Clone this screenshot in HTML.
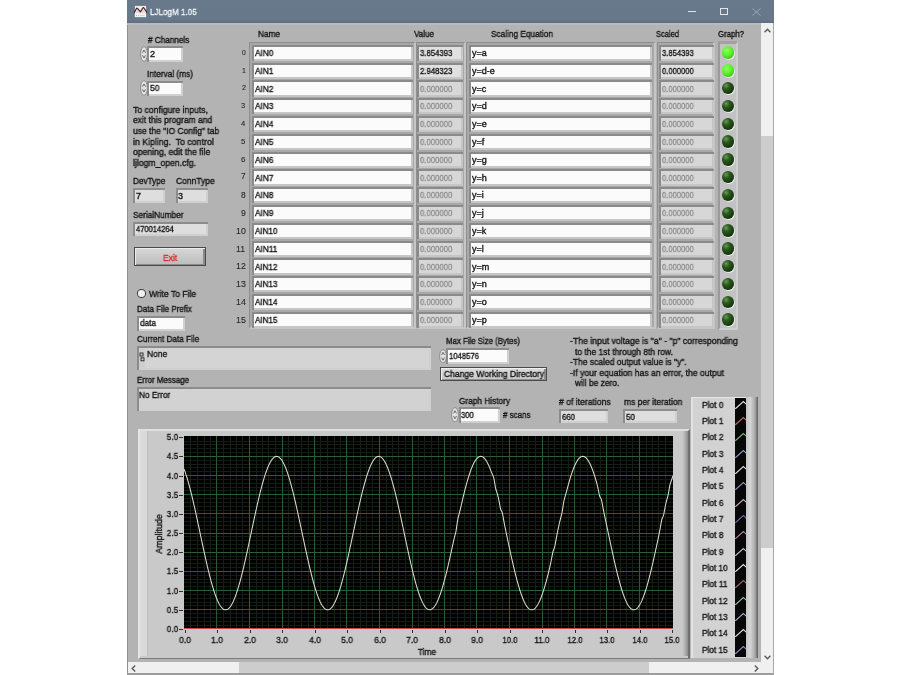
<!DOCTYPE html>
<html><head><meta charset="utf-8"><style>
html,body{margin:0;padding:0;}
body{width:900px;height:675px;background:#fff;position:relative;overflow:hidden;font-family:"Liberation Sans", sans-serif;}
.t,.tt{position:absolute;white-space:nowrap;font-family:"Liberation Sans", sans-serif;will-change:transform;}
.t{-webkit-text-stroke:0.35px currentColor;}
</style></head><body>
<div style="position:absolute;left:127.00px;top:0.00px;width:647.00px;height:675.00px;background:#b3b3b3;"></div>
<div style="position:absolute;left:127.00px;top:0.00px;width:647.00px;height:23.00px;background:linear-gradient(#67798b 0%,#66788a 85%,#626d7e 100%);"></div>
<div style="position:absolute;left:127.00px;top:23.00px;width:647.00px;height:1.50px;background:#b5bbc5;"></div>
<div style="position:absolute;left:127.00px;top:24.50px;width:1.20px;height:650.50px;background:#8e8e8e;"></div>
<div style="position:absolute;left:127.00px;top:673.30px;width:647.00px;height:1.70px;background:#9c9c9c;"></div>
<svg style="position:absolute;left:133px;top:5px" width="15" height="13" viewBox="0 0 15 13"><rect x="1.9" y="0.9" width="11.2" height="11.2" fill="#f6eaea"/><path d="M3 8 L4.2 3.5 L6.8 7.5 Z M8 7.5 L10.3 3.2 L12 8 Z" fill="#ecc8c8" opacity="0.7"/><rect x="1.9" y="9" width="11.2" height="3.1" fill="#f2f5f5"/><path d="M3 10.6 H12" stroke="#8a9a9a" stroke-width="0.7" stroke-dasharray="1 1.2"/><path d="M1.2 7.6 L3.6 3.2 Q3.9 2.7 4.3 3.2 L7.4 6.9 L10 2.7 Q10.3 2.2 10.7 2.7 L14 7.6" stroke="#3e2424" stroke-width="1.15" fill="none" stroke-linejoin="round"/></svg>
<div class="tt" style="left:150.00px;top:5.70px;font-size:9.6px;line-height:12px;color:#f4f6fa;transform:scaleX(0.841);transform-origin:left center;-webkit-text-stroke:0.3px #f4f6fa;">LJLogM 1.05</div>
<div style="position:absolute;left:688.00px;top:11.00px;width:8.00px;height:1.00px;background:#dfe4ea;"></div>
<div style="position:absolute;left:720.00px;top:8.00px;width:8.00px;height:7.00px;border:1px solid #e2e6ec;box-sizing:border-box;"></div>
<svg style="position:absolute;left:752px;top:8px" width="9" height="8" viewBox="0 0 9 8"><path d="M0.5 0.5 L8.5 7.5 M8.5 0.5 L0.5 7.5" stroke="#9aa6b4" stroke-width="1"/></svg>
<div style="position:absolute;left:761.00px;top:23.00px;width:12.60px;height:639.00px;background:#f0f0f0;"></div>
<div style="position:absolute;left:761.00px;top:136.00px;width:12.60px;height:412.00px;background:#cdcdcd;"></div>
<div style="position:absolute;left:773.00px;top:23.00px;width:1.00px;height:652.00px;background:#a3abab;"></div>
<div style="position:absolute;left:128.00px;top:662.00px;width:633.00px;height:11.30px;background:#f0f0f0;"></div>
<div style="position:absolute;left:239.40px;top:662.00px;width:409.50px;height:11.30px;background:#cdcdcd;"></div>
<div style="position:absolute;left:761.00px;top:662.00px;width:12.00px;height:11.30px;background:#f0f0f0;"></div>
<svg style="position:absolute;left:764px;top:27.5px" width="7" height="5"><path d="M0.6 4.2 L3.5 1.2 L6.4 4.2" stroke="#5a5a5a" stroke-width="1.4" fill="none"/></svg>
<svg style="position:absolute;left:764px;top:654.5px" width="7" height="5"><path d="M0.6 0.8 L3.5 3.8 L6.4 0.8" stroke="#5a5a5a" stroke-width="1.4" fill="none"/></svg>
<svg style="position:absolute;left:131px;top:665px" width="5" height="7"><path d="M4.2 0.6 L1.2 3.5 L4.2 6.4" stroke="#5a5a5a" stroke-width="1.4" fill="none"/></svg>
<svg style="position:absolute;left:753.8px;top:665px" width="5" height="7"><path d="M0.8 0.6 L3.8 3.5 L0.8 6.4" stroke="#5a5a5a" stroke-width="1.4" fill="none"/></svg>
<div class="t" style="left:147.70px;top:33.50px;font-size:9px;line-height:12px;color:#141414;transform:scaleX(0.907);transform-origin:left center;"># Channels</div>
<svg style="position:absolute;left:139.5px;top:46px" width="8" height="16" viewBox="0 0 8 16"><ellipse cx="4" cy="8.0" rx="3.4" ry="7.4" fill="#e2e2e2" stroke="#8a8a8a" stroke-width="1"/><path d="M2.5 6.7 L4 4.0 L5.5 6.7 M2.5 9.3 L4 12.0 L5.5 9.3" stroke="#5a5a5a" stroke-width="0.9" fill="none"/></svg>
<div style="position:absolute;left:146.50px;top:46.00px;width:36.50px;height:16.00px;background:#8c8c8c;"></div>
<div style="position:absolute;left:148.50px;top:60.00px;width:34.50px;height:2.00px;background:#d0d0d0;"></div>
<div style="position:absolute;left:181.00px;top:48.00px;width:2.00px;height:14.00px;background:#d0d0d0;"></div>
<div style="position:absolute;left:148.50px;top:48.00px;width:32.50px;height:12.00px;background:#fbfbfb;"></div>
<div class="t" style="left:150.00px;top:48.00px;font-size:9px;line-height:12px;color:#141414;">2</div>
<div class="t" style="left:147.00px;top:67.50px;font-size:9px;line-height:12px;color:#141414;transform:scaleX(0.920);transform-origin:left center;">Interval (ms)</div>
<svg style="position:absolute;left:139.5px;top:80px" width="8" height="16" viewBox="0 0 8 16"><ellipse cx="4" cy="8.0" rx="3.4" ry="7.4" fill="#e2e2e2" stroke="#8a8a8a" stroke-width="1"/><path d="M2.5 6.7 L4 4.0 L5.5 6.7 M2.5 9.3 L4 12.0 L5.5 9.3" stroke="#5a5a5a" stroke-width="0.9" fill="none"/></svg>
<div style="position:absolute;left:146.50px;top:80.50px;width:36.50px;height:15.50px;background:#8c8c8c;"></div>
<div style="position:absolute;left:148.50px;top:94.00px;width:34.50px;height:2.00px;background:#d0d0d0;"></div>
<div style="position:absolute;left:181.00px;top:82.50px;width:2.00px;height:13.50px;background:#d0d0d0;"></div>
<div style="position:absolute;left:148.50px;top:82.50px;width:32.50px;height:11.50px;background:#fbfbfb;"></div>
<div class="t" style="left:149.50px;top:82.20px;font-size:9px;line-height:12px;color:#141414;transform:scaleX(0.949);transform-origin:left center;">50</div>
<div class="t" style="left:133.00px;top:103.80px;font-size:9px;line-height:12px;color:#141414;transform:scaleX(0.961);transform-origin:left center;">To configure inputs,</div>
<div class="t" style="left:133.00px;top:114.40px;font-size:9px;line-height:12px;color:#141414;transform:scaleX(0.942);transform-origin:left center;">exit this program and</div>
<div class="t" style="left:133.00px;top:125.00px;font-size:9px;line-height:12px;color:#141414;transform:scaleX(0.941);transform-origin:left center;">use the &quot;IO Config&quot; tab</div>
<div class="t" style="left:133.00px;top:135.60px;font-size:9px;line-height:12px;color:#141414;transform:scaleX(0.974);transform-origin:left center;">in Kipling.&nbsp; To control</div>
<div class="t" style="left:133.00px;top:146.20px;font-size:9px;line-height:12px;color:#141414;transform:scaleX(0.960);transform-origin:left center;">opening, edit the file</div>
<div class="t" style="left:133.00px;top:156.80px;font-size:9px;line-height:12px;color:#141414;transform:scaleX(0.961);transform-origin:left center;">ljlogm_open.cfg.</div>
<div class="t" style="left:133.00px;top:175.40px;font-size:9px;line-height:12px;color:#141414;transform:scaleX(0.909);transform-origin:left center;">DevType</div>
<div style="position:absolute;left:133.20px;top:188.00px;width:31.80px;height:15.00px;background:#8c8c8c;"></div>
<div style="position:absolute;left:135.20px;top:201.00px;width:29.80px;height:2.00px;background:#d0d0d0;"></div>
<div style="position:absolute;left:163.00px;top:190.00px;width:2.00px;height:13.00px;background:#d0d0d0;"></div>
<div style="position:absolute;left:135.20px;top:190.00px;width:27.80px;height:11.00px;background:#dedede;"></div>
<div class="t" style="left:136.30px;top:190.00px;font-size:9px;line-height:12px;color:#141414;">7</div>
<div class="t" style="left:175.90px;top:175.40px;font-size:9px;line-height:12px;color:#141414;transform:scaleX(0.943);transform-origin:left center;">ConnType</div>
<div style="position:absolute;left:175.70px;top:188.00px;width:32.00px;height:15.00px;background:#8c8c8c;"></div>
<div style="position:absolute;left:177.70px;top:201.00px;width:30.00px;height:2.00px;background:#d0d0d0;"></div>
<div style="position:absolute;left:205.70px;top:190.00px;width:2.00px;height:13.00px;background:#d0d0d0;"></div>
<div style="position:absolute;left:177.70px;top:190.00px;width:28.00px;height:11.00px;background:#dedede;"></div>
<div class="t" style="left:178.30px;top:190.00px;font-size:9px;line-height:12px;color:#141414;">3</div>
<div class="t" style="left:133.00px;top:209.10px;font-size:9px;line-height:12px;color:#141414;transform:scaleX(0.918);transform-origin:left center;">SerialNumber</div>
<div style="position:absolute;left:133.20px;top:221.50px;width:74.60px;height:14.50px;background:#8c8c8c;"></div>
<div style="position:absolute;left:135.20px;top:234.00px;width:72.60px;height:2.00px;background:#d0d0d0;"></div>
<div style="position:absolute;left:205.80px;top:223.50px;width:2.00px;height:12.50px;background:#d0d0d0;"></div>
<div style="position:absolute;left:135.20px;top:223.50px;width:70.60px;height:10.50px;background:#dedede;"></div>
<div class="t" style="left:135.80px;top:223.10px;font-size:9px;line-height:12px;color:#141414;transform:scaleX(0.839);transform-origin:left center;">470014264</div>
<div style="position:absolute;left:133.70px;top:247.00px;width:72.30px;height:19.30px;background:linear-gradient(#d8d8d8,#c8c8c8 55%,#bcbcbc);border:1.3px solid #4a4a4a;box-sizing:border-box;box-shadow:inset 1px 1px 0 #ececec, inset -2px -1px 0 #8a8a8a;"></div>
<div class="t" style="left:-30.40px;width:400px;text-align:center;top:251.50px;font-size:9px;line-height:12px;color:#dc2a30;transform:scaleX(0.933);transform-origin:center center;">Exit</div>
<div style="position:absolute;left:137.2px;top:289.3px;width:8.8px;height:8.4px;border-radius:50%;background:#f2f2f2;border:1px solid #3a3a3a;box-sizing:border-box"></div>
<div class="t" style="left:148.50px;top:288.00px;font-size:9px;line-height:12px;color:#141414;transform:scaleX(0.946);transform-origin:left center;">Write To File</div>
<div class="t" style="left:137.40px;top:303.00px;font-size:9px;line-height:12px;color:#141414;transform:scaleX(0.891);transform-origin:left center;">Data File Prefix</div>
<div style="position:absolute;left:137.00px;top:315.50px;width:48.00px;height:15.00px;background:#8c8c8c;"></div>
<div style="position:absolute;left:139.00px;top:328.50px;width:46.00px;height:2.00px;background:#d0d0d0;"></div>
<div style="position:absolute;left:183.00px;top:317.50px;width:2.00px;height:13.00px;background:#d0d0d0;"></div>
<div style="position:absolute;left:139.00px;top:317.50px;width:44.00px;height:11.00px;background:#fbfbfb;"></div>
<div class="t" style="left:140.00px;top:317.00px;font-size:9px;line-height:12px;color:#141414;transform:scaleX(0.914);transform-origin:left center;">data</div>
<div class="t" style="left:137.40px;top:333.00px;font-size:9px;line-height:12px;color:#141414;transform:scaleX(0.908);transform-origin:left center;">Current Data File</div>
<div style="position:absolute;left:136.50px;top:346.00px;width:294.00px;height:24.00px;background:#8c8c8c;"></div>
<div style="position:absolute;left:138.50px;top:368.00px;width:292.00px;height:2.00px;background:#d0d0d0;"></div>
<div style="position:absolute;left:428.50px;top:348.00px;width:2.00px;height:22.00px;background:#d0d0d0;"></div>
<div style="position:absolute;left:138.50px;top:348.00px;width:290.00px;height:20.00px;background:#d4d4d4;"></div>
<div style="position:absolute;left:138.50px;top:348.00px;width:6.00px;height:20.00px;background:#cecece;"></div>
<svg style="position:absolute;left:139px;top:352px" width="6" height="10"><rect x="1" y="1" width="3" height="3" fill="none" stroke="#222" stroke-width="0.9"/><rect x="2" y="5.8" width="3" height="3" fill="none" stroke="#222" stroke-width="0.9"/></svg>
<div class="t" style="left:146.80px;top:347.50px;font-size:9px;line-height:12px;color:#141414;transform:scaleX(0.939);transform-origin:left center;">None</div>
<div class="t" style="left:136.70px;top:374.00px;font-size:9px;line-height:12px;color:#141414;transform:scaleX(0.881);transform-origin:left center;">Error Message</div>
<div style="position:absolute;left:136.50px;top:387.00px;width:294.00px;height:23.50px;background:#8c8c8c;"></div>
<div style="position:absolute;left:138.50px;top:408.50px;width:292.00px;height:2.00px;background:#d0d0d0;"></div>
<div style="position:absolute;left:428.50px;top:389.00px;width:2.00px;height:21.50px;background:#d0d0d0;"></div>
<div style="position:absolute;left:138.50px;top:389.00px;width:290.00px;height:19.50px;background:#d2d2d2;"></div>
<div class="t" style="left:139.20px;top:389.00px;font-size:9px;line-height:12px;color:#141414;transform:scaleX(0.921);transform-origin:left center;">No Error</div>
<div class="t" style="left:258.30px;top:28.20px;font-size:9px;line-height:12px;color:#141414;transform:scaleX(0.916);transform-origin:left center;">Name</div>
<div class="t" style="left:414.00px;top:28.20px;font-size:9px;line-height:12px;color:#141414;transform:scaleX(0.895);transform-origin:left center;">Value</div>
<div class="t" style="left:491.10px;top:28.20px;font-size:9px;line-height:12px;color:#141414;transform:scaleX(0.918);transform-origin:left center;">Scaling Equation</div>
<div class="t" style="left:656.00px;top:28.20px;font-size:9px;line-height:12px;color:#141414;transform:scaleX(0.836);transform-origin:left center;">Scaled</div>
<div class="t" style="left:718.00px;top:28.20px;font-size:9px;line-height:12px;color:#141414;transform:scaleX(0.866);transform-origin:left center;">Graph?</div>
<div style="position:absolute;left:249.00px;top:41.80px;width:166.50px;height:287.20px;background:#a8a8a8;border-top:1.5px solid #8e8e8e;border-left:1.5px solid #8e8e8e;border-right:2.5px solid #c6c6c6;border-bottom:2px solid #c6c6c6;box-sizing:border-box;"></div>
<div style="position:absolute;left:416.00px;top:41.80px;width:50.40px;height:287.20px;background:#a8a8a8;border-top:1.5px solid #8e8e8e;border-left:1.5px solid #8e8e8e;border-right:2.5px solid #c6c6c6;border-bottom:2px solid #c6c6c6;box-sizing:border-box;"></div>
<div style="position:absolute;left:466.40px;top:41.80px;width:190.10px;height:287.20px;background:#a8a8a8;border-top:1.5px solid #8e8e8e;border-left:1.5px solid #8e8e8e;border-right:2.5px solid #c6c6c6;border-bottom:2px solid #c6c6c6;box-sizing:border-box;"></div>
<div style="position:absolute;left:656.90px;top:41.80px;width:58.60px;height:287.20px;background:#a8a8a8;border-top:1.5px solid #8e8e8e;border-left:1.5px solid #8e8e8e;border-right:2.5px solid #c6c6c6;border-bottom:2px solid #c6c6c6;box-sizing:border-box;"></div>
<div style="position:absolute;left:251.50px;top:44.70px;width:161.60px;height:16.30px;background:#8a8a8a;"></div>
<div style="position:absolute;left:253.50px;top:59.00px;width:159.60px;height:2.00px;background:#c6c6c6;"></div>
<div style="position:absolute;left:411.10px;top:46.70px;width:2.00px;height:14.30px;background:#c6c6c6;"></div>
<div style="position:absolute;left:253.50px;top:46.70px;width:157.60px;height:12.30px;background:#fbfbfb;"></div>
<div style="position:absolute;left:417.10px;top:44.70px;width:45.80px;height:16.30px;background:#8a8a8a;"></div>
<div style="position:absolute;left:419.10px;top:59.00px;width:43.80px;height:2.00px;background:#c6c6c6;"></div>
<div style="position:absolute;left:460.90px;top:46.70px;width:2.00px;height:14.30px;background:#c6c6c6;"></div>
<div style="position:absolute;left:419.10px;top:46.70px;width:41.80px;height:12.30px;background:#e0e0e0;"></div>
<div style="position:absolute;left:468.90px;top:44.70px;width:183.30px;height:16.30px;background:#8a8a8a;"></div>
<div style="position:absolute;left:470.90px;top:59.00px;width:181.30px;height:2.00px;background:#c6c6c6;"></div>
<div style="position:absolute;left:650.20px;top:46.70px;width:2.00px;height:14.30px;background:#c6c6c6;"></div>
<div style="position:absolute;left:470.90px;top:46.70px;width:179.30px;height:12.30px;background:#fbfbfb;"></div>
<div style="position:absolute;left:658.90px;top:44.70px;width:54.70px;height:16.30px;background:#8a8a8a;"></div>
<div style="position:absolute;left:660.90px;top:59.00px;width:52.70px;height:2.00px;background:#c6c6c6;"></div>
<div style="position:absolute;left:711.60px;top:46.70px;width:2.00px;height:14.30px;background:#c6c6c6;"></div>
<div style="position:absolute;left:660.90px;top:46.70px;width:50.70px;height:12.30px;background:#e0e0e0;"></div>
<div class="t" style="right:654.5px;top:46.70px;font-size:6.80px;line-height:12px;color:#262626;-webkit-text-stroke:0.1px #262626">0</div>
<div class="t" style="left:254.60px;top:47.00px;font-size:9px;line-height:12px;color:#141414;transform:scaleX(0.920);transform-origin:left center;">AIN0</div>
<div class="t" style="left:419.80px;top:47.00px;font-size:9px;line-height:12px;color:#141414;transform:scaleX(0.861);transform-origin:left center;">3.854393</div>
<div class="t" style="left:472.00px;top:47.00px;font-size:9px;line-height:12px;color:#141414;">y=a</div>
<div class="t" style="left:661.80px;top:47.00px;font-size:9px;line-height:12px;color:#141414;transform:scaleX(0.847);transform-origin:left center;">3.854393</div>
<div style="position:absolute;left:251.50px;top:62.50px;width:161.60px;height:16.30px;background:#8a8a8a;"></div>
<div style="position:absolute;left:253.50px;top:76.80px;width:159.60px;height:2.00px;background:#c6c6c6;"></div>
<div style="position:absolute;left:411.10px;top:64.50px;width:2.00px;height:14.30px;background:#c6c6c6;"></div>
<div style="position:absolute;left:253.50px;top:64.50px;width:157.60px;height:12.30px;background:#fbfbfb;"></div>
<div style="position:absolute;left:417.10px;top:62.50px;width:45.80px;height:16.30px;background:#8a8a8a;"></div>
<div style="position:absolute;left:419.10px;top:76.80px;width:43.80px;height:2.00px;background:#c6c6c6;"></div>
<div style="position:absolute;left:460.90px;top:64.50px;width:2.00px;height:14.30px;background:#c6c6c6;"></div>
<div style="position:absolute;left:419.10px;top:64.50px;width:41.80px;height:12.30px;background:#e0e0e0;"></div>
<div style="position:absolute;left:468.90px;top:62.50px;width:183.30px;height:16.30px;background:#8a8a8a;"></div>
<div style="position:absolute;left:470.90px;top:76.80px;width:181.30px;height:2.00px;background:#c6c6c6;"></div>
<div style="position:absolute;left:650.20px;top:64.50px;width:2.00px;height:14.30px;background:#c6c6c6;"></div>
<div style="position:absolute;left:470.90px;top:64.50px;width:179.30px;height:12.30px;background:#fbfbfb;"></div>
<div style="position:absolute;left:658.90px;top:62.50px;width:54.70px;height:16.30px;background:#8a8a8a;"></div>
<div style="position:absolute;left:660.90px;top:76.80px;width:52.70px;height:2.00px;background:#c6c6c6;"></div>
<div style="position:absolute;left:711.60px;top:64.50px;width:2.00px;height:14.30px;background:#c6c6c6;"></div>
<div style="position:absolute;left:660.90px;top:64.50px;width:50.70px;height:12.30px;background:#e0e0e0;"></div>
<div class="t" style="right:654.5px;top:64.50px;font-size:7.00px;line-height:12px;color:#262626;-webkit-text-stroke:0.1px #262626">1</div>
<div class="t" style="left:254.60px;top:64.80px;font-size:9px;line-height:12px;color:#141414;transform:scaleX(0.920);transform-origin:left center;">AIN1</div>
<div class="t" style="left:419.80px;top:64.80px;font-size:9px;line-height:12px;color:#141414;transform:scaleX(0.861);transform-origin:left center;">2.948323</div>
<div class="t" style="left:472.00px;top:64.80px;font-size:9px;line-height:12px;color:#141414;">y=d-e</div>
<div class="t" style="left:661.80px;top:64.80px;font-size:9px;line-height:12px;color:#141414;transform:scaleX(0.847);transform-origin:left center;">0.000000</div>
<div style="position:absolute;left:251.50px;top:80.30px;width:161.60px;height:16.30px;background:#8a8a8a;"></div>
<div style="position:absolute;left:253.50px;top:94.60px;width:159.60px;height:2.00px;background:#c6c6c6;"></div>
<div style="position:absolute;left:411.10px;top:82.30px;width:2.00px;height:14.30px;background:#c6c6c6;"></div>
<div style="position:absolute;left:253.50px;top:82.30px;width:157.60px;height:12.30px;background:#fbfbfb;"></div>
<div style="position:absolute;left:417.10px;top:80.30px;width:45.80px;height:16.30px;background:#8a8a8a;"></div>
<div style="position:absolute;left:419.10px;top:94.60px;width:43.80px;height:2.00px;background:#c6c6c6;"></div>
<div style="position:absolute;left:460.90px;top:82.30px;width:2.00px;height:14.30px;background:#c6c6c6;"></div>
<div style="position:absolute;left:419.10px;top:82.30px;width:41.80px;height:12.30px;background:#d7d7d7;"></div>
<div style="position:absolute;left:468.90px;top:80.30px;width:183.30px;height:16.30px;background:#8a8a8a;"></div>
<div style="position:absolute;left:470.90px;top:94.60px;width:181.30px;height:2.00px;background:#c6c6c6;"></div>
<div style="position:absolute;left:650.20px;top:82.30px;width:2.00px;height:14.30px;background:#c6c6c6;"></div>
<div style="position:absolute;left:470.90px;top:82.30px;width:179.30px;height:12.30px;background:#fbfbfb;"></div>
<div style="position:absolute;left:658.90px;top:80.30px;width:54.70px;height:16.30px;background:#8a8a8a;"></div>
<div style="position:absolute;left:660.90px;top:94.60px;width:52.70px;height:2.00px;background:#c6c6c6;"></div>
<div style="position:absolute;left:711.60px;top:82.30px;width:2.00px;height:14.30px;background:#c6c6c6;"></div>
<div style="position:absolute;left:660.90px;top:82.30px;width:50.70px;height:12.30px;background:#d7d7d7;"></div>
<div class="t" style="right:654.5px;top:82.30px;font-size:7.20px;line-height:12px;color:#262626;-webkit-text-stroke:0.1px #262626">2</div>
<div class="t" style="left:254.60px;top:82.60px;font-size:9px;line-height:12px;color:#141414;transform:scaleX(0.920);transform-origin:left center;">AIN2</div>
<div class="t" style="left:419.80px;top:82.60px;font-size:9px;line-height:12px;color:#8e8e8e;transform:scaleX(0.861);transform-origin:left center;">0.000000</div>
<div class="t" style="left:472.00px;top:82.60px;font-size:9px;line-height:12px;color:#141414;">y=c</div>
<div class="t" style="left:661.80px;top:82.60px;font-size:9px;line-height:12px;color:#8e8e8e;transform:scaleX(0.847);transform-origin:left center;">0.000000</div>
<div style="position:absolute;left:251.50px;top:98.10px;width:161.60px;height:16.30px;background:#8a8a8a;"></div>
<div style="position:absolute;left:253.50px;top:112.40px;width:159.60px;height:2.00px;background:#c6c6c6;"></div>
<div style="position:absolute;left:411.10px;top:100.10px;width:2.00px;height:14.30px;background:#c6c6c6;"></div>
<div style="position:absolute;left:253.50px;top:100.10px;width:157.60px;height:12.30px;background:#fbfbfb;"></div>
<div style="position:absolute;left:417.10px;top:98.10px;width:45.80px;height:16.30px;background:#8a8a8a;"></div>
<div style="position:absolute;left:419.10px;top:112.40px;width:43.80px;height:2.00px;background:#c6c6c6;"></div>
<div style="position:absolute;left:460.90px;top:100.10px;width:2.00px;height:14.30px;background:#c6c6c6;"></div>
<div style="position:absolute;left:419.10px;top:100.10px;width:41.80px;height:12.30px;background:#d7d7d7;"></div>
<div style="position:absolute;left:468.90px;top:98.10px;width:183.30px;height:16.30px;background:#8a8a8a;"></div>
<div style="position:absolute;left:470.90px;top:112.40px;width:181.30px;height:2.00px;background:#c6c6c6;"></div>
<div style="position:absolute;left:650.20px;top:100.10px;width:2.00px;height:14.30px;background:#c6c6c6;"></div>
<div style="position:absolute;left:470.90px;top:100.10px;width:179.30px;height:12.30px;background:#fbfbfb;"></div>
<div style="position:absolute;left:658.90px;top:98.10px;width:54.70px;height:16.30px;background:#8a8a8a;"></div>
<div style="position:absolute;left:660.90px;top:112.40px;width:52.70px;height:2.00px;background:#c6c6c6;"></div>
<div style="position:absolute;left:711.60px;top:100.10px;width:2.00px;height:14.30px;background:#c6c6c6;"></div>
<div style="position:absolute;left:660.90px;top:100.10px;width:50.70px;height:12.30px;background:#d7d7d7;"></div>
<div class="t" style="right:654.5px;top:100.10px;font-size:7.40px;line-height:12px;color:#262626;-webkit-text-stroke:0.1px #262626">3</div>
<div class="t" style="left:254.60px;top:100.40px;font-size:9px;line-height:12px;color:#141414;transform:scaleX(0.920);transform-origin:left center;">AIN3</div>
<div class="t" style="left:419.80px;top:100.40px;font-size:9px;line-height:12px;color:#8e8e8e;transform:scaleX(0.861);transform-origin:left center;">0.000000</div>
<div class="t" style="left:472.00px;top:100.40px;font-size:9px;line-height:12px;color:#141414;">y=d</div>
<div class="t" style="left:661.80px;top:100.40px;font-size:9px;line-height:12px;color:#8e8e8e;transform:scaleX(0.847);transform-origin:left center;">0.000000</div>
<div style="position:absolute;left:251.50px;top:115.90px;width:161.60px;height:16.30px;background:#8a8a8a;"></div>
<div style="position:absolute;left:253.50px;top:130.20px;width:159.60px;height:2.00px;background:#c6c6c6;"></div>
<div style="position:absolute;left:411.10px;top:117.90px;width:2.00px;height:14.30px;background:#c6c6c6;"></div>
<div style="position:absolute;left:253.50px;top:117.90px;width:157.60px;height:12.30px;background:#fbfbfb;"></div>
<div style="position:absolute;left:417.10px;top:115.90px;width:45.80px;height:16.30px;background:#8a8a8a;"></div>
<div style="position:absolute;left:419.10px;top:130.20px;width:43.80px;height:2.00px;background:#c6c6c6;"></div>
<div style="position:absolute;left:460.90px;top:117.90px;width:2.00px;height:14.30px;background:#c6c6c6;"></div>
<div style="position:absolute;left:419.10px;top:117.90px;width:41.80px;height:12.30px;background:#d7d7d7;"></div>
<div style="position:absolute;left:468.90px;top:115.90px;width:183.30px;height:16.30px;background:#8a8a8a;"></div>
<div style="position:absolute;left:470.90px;top:130.20px;width:181.30px;height:2.00px;background:#c6c6c6;"></div>
<div style="position:absolute;left:650.20px;top:117.90px;width:2.00px;height:14.30px;background:#c6c6c6;"></div>
<div style="position:absolute;left:470.90px;top:117.90px;width:179.30px;height:12.30px;background:#fbfbfb;"></div>
<div style="position:absolute;left:658.90px;top:115.90px;width:54.70px;height:16.30px;background:#8a8a8a;"></div>
<div style="position:absolute;left:660.90px;top:130.20px;width:52.70px;height:2.00px;background:#c6c6c6;"></div>
<div style="position:absolute;left:711.60px;top:117.90px;width:2.00px;height:14.30px;background:#c6c6c6;"></div>
<div style="position:absolute;left:660.90px;top:117.90px;width:50.70px;height:12.30px;background:#d7d7d7;"></div>
<div class="t" style="right:654.5px;top:117.90px;font-size:7.60px;line-height:12px;color:#262626;-webkit-text-stroke:0.1px #262626">4</div>
<div class="t" style="left:254.60px;top:118.20px;font-size:9px;line-height:12px;color:#141414;transform:scaleX(0.920);transform-origin:left center;">AIN4</div>
<div class="t" style="left:419.80px;top:118.20px;font-size:9px;line-height:12px;color:#8e8e8e;transform:scaleX(0.861);transform-origin:left center;">0.000000</div>
<div class="t" style="left:472.00px;top:118.20px;font-size:9px;line-height:12px;color:#141414;">y=e</div>
<div class="t" style="left:661.80px;top:118.20px;font-size:9px;line-height:12px;color:#8e8e8e;transform:scaleX(0.847);transform-origin:left center;">0.000000</div>
<div style="position:absolute;left:251.50px;top:133.70px;width:161.60px;height:16.30px;background:#8a8a8a;"></div>
<div style="position:absolute;left:253.50px;top:148.00px;width:159.60px;height:2.00px;background:#c6c6c6;"></div>
<div style="position:absolute;left:411.10px;top:135.70px;width:2.00px;height:14.30px;background:#c6c6c6;"></div>
<div style="position:absolute;left:253.50px;top:135.70px;width:157.60px;height:12.30px;background:#fbfbfb;"></div>
<div style="position:absolute;left:417.10px;top:133.70px;width:45.80px;height:16.30px;background:#8a8a8a;"></div>
<div style="position:absolute;left:419.10px;top:148.00px;width:43.80px;height:2.00px;background:#c6c6c6;"></div>
<div style="position:absolute;left:460.90px;top:135.70px;width:2.00px;height:14.30px;background:#c6c6c6;"></div>
<div style="position:absolute;left:419.10px;top:135.70px;width:41.80px;height:12.30px;background:#d7d7d7;"></div>
<div style="position:absolute;left:468.90px;top:133.70px;width:183.30px;height:16.30px;background:#8a8a8a;"></div>
<div style="position:absolute;left:470.90px;top:148.00px;width:181.30px;height:2.00px;background:#c6c6c6;"></div>
<div style="position:absolute;left:650.20px;top:135.70px;width:2.00px;height:14.30px;background:#c6c6c6;"></div>
<div style="position:absolute;left:470.90px;top:135.70px;width:179.30px;height:12.30px;background:#fbfbfb;"></div>
<div style="position:absolute;left:658.90px;top:133.70px;width:54.70px;height:16.30px;background:#8a8a8a;"></div>
<div style="position:absolute;left:660.90px;top:148.00px;width:52.70px;height:2.00px;background:#c6c6c6;"></div>
<div style="position:absolute;left:711.60px;top:135.70px;width:2.00px;height:14.30px;background:#c6c6c6;"></div>
<div style="position:absolute;left:660.90px;top:135.70px;width:50.70px;height:12.30px;background:#d7d7d7;"></div>
<div class="t" style="right:654.5px;top:135.70px;font-size:7.80px;line-height:12px;color:#262626;-webkit-text-stroke:0.1px #262626">5</div>
<div class="t" style="left:254.60px;top:136.00px;font-size:9px;line-height:12px;color:#141414;transform:scaleX(0.920);transform-origin:left center;">AIN5</div>
<div class="t" style="left:419.80px;top:136.00px;font-size:9px;line-height:12px;color:#8e8e8e;transform:scaleX(0.861);transform-origin:left center;">0.000000</div>
<div class="t" style="left:472.00px;top:136.00px;font-size:9px;line-height:12px;color:#141414;">y=f</div>
<div class="t" style="left:661.80px;top:136.00px;font-size:9px;line-height:12px;color:#8e8e8e;transform:scaleX(0.847);transform-origin:left center;">0.000000</div>
<div style="position:absolute;left:251.50px;top:151.50px;width:161.60px;height:16.30px;background:#8a8a8a;"></div>
<div style="position:absolute;left:253.50px;top:165.80px;width:159.60px;height:2.00px;background:#c6c6c6;"></div>
<div style="position:absolute;left:411.10px;top:153.50px;width:2.00px;height:14.30px;background:#c6c6c6;"></div>
<div style="position:absolute;left:253.50px;top:153.50px;width:157.60px;height:12.30px;background:#fbfbfb;"></div>
<div style="position:absolute;left:417.10px;top:151.50px;width:45.80px;height:16.30px;background:#8a8a8a;"></div>
<div style="position:absolute;left:419.10px;top:165.80px;width:43.80px;height:2.00px;background:#c6c6c6;"></div>
<div style="position:absolute;left:460.90px;top:153.50px;width:2.00px;height:14.30px;background:#c6c6c6;"></div>
<div style="position:absolute;left:419.10px;top:153.50px;width:41.80px;height:12.30px;background:#d7d7d7;"></div>
<div style="position:absolute;left:468.90px;top:151.50px;width:183.30px;height:16.30px;background:#8a8a8a;"></div>
<div style="position:absolute;left:470.90px;top:165.80px;width:181.30px;height:2.00px;background:#c6c6c6;"></div>
<div style="position:absolute;left:650.20px;top:153.50px;width:2.00px;height:14.30px;background:#c6c6c6;"></div>
<div style="position:absolute;left:470.90px;top:153.50px;width:179.30px;height:12.30px;background:#fbfbfb;"></div>
<div style="position:absolute;left:658.90px;top:151.50px;width:54.70px;height:16.30px;background:#8a8a8a;"></div>
<div style="position:absolute;left:660.90px;top:165.80px;width:52.70px;height:2.00px;background:#c6c6c6;"></div>
<div style="position:absolute;left:711.60px;top:153.50px;width:2.00px;height:14.30px;background:#c6c6c6;"></div>
<div style="position:absolute;left:660.90px;top:153.50px;width:50.70px;height:12.30px;background:#d7d7d7;"></div>
<div class="t" style="right:654.5px;top:153.50px;font-size:8.00px;line-height:12px;color:#262626;-webkit-text-stroke:0.1px #262626">6</div>
<div class="t" style="left:254.60px;top:153.80px;font-size:9px;line-height:12px;color:#141414;transform:scaleX(0.920);transform-origin:left center;">AIN6</div>
<div class="t" style="left:419.80px;top:153.80px;font-size:9px;line-height:12px;color:#8e8e8e;transform:scaleX(0.861);transform-origin:left center;">0.000000</div>
<div class="t" style="left:472.00px;top:153.80px;font-size:9px;line-height:12px;color:#141414;">y=g</div>
<div class="t" style="left:661.80px;top:153.80px;font-size:9px;line-height:12px;color:#8e8e8e;transform:scaleX(0.847);transform-origin:left center;">0.000000</div>
<div style="position:absolute;left:251.50px;top:169.30px;width:161.60px;height:16.30px;background:#8a8a8a;"></div>
<div style="position:absolute;left:253.50px;top:183.60px;width:159.60px;height:2.00px;background:#c6c6c6;"></div>
<div style="position:absolute;left:411.10px;top:171.30px;width:2.00px;height:14.30px;background:#c6c6c6;"></div>
<div style="position:absolute;left:253.50px;top:171.30px;width:157.60px;height:12.30px;background:#fbfbfb;"></div>
<div style="position:absolute;left:417.10px;top:169.30px;width:45.80px;height:16.30px;background:#8a8a8a;"></div>
<div style="position:absolute;left:419.10px;top:183.60px;width:43.80px;height:2.00px;background:#c6c6c6;"></div>
<div style="position:absolute;left:460.90px;top:171.30px;width:2.00px;height:14.30px;background:#c6c6c6;"></div>
<div style="position:absolute;left:419.10px;top:171.30px;width:41.80px;height:12.30px;background:#d7d7d7;"></div>
<div style="position:absolute;left:468.90px;top:169.30px;width:183.30px;height:16.30px;background:#8a8a8a;"></div>
<div style="position:absolute;left:470.90px;top:183.60px;width:181.30px;height:2.00px;background:#c6c6c6;"></div>
<div style="position:absolute;left:650.20px;top:171.30px;width:2.00px;height:14.30px;background:#c6c6c6;"></div>
<div style="position:absolute;left:470.90px;top:171.30px;width:179.30px;height:12.30px;background:#fbfbfb;"></div>
<div style="position:absolute;left:658.90px;top:169.30px;width:54.70px;height:16.30px;background:#8a8a8a;"></div>
<div style="position:absolute;left:660.90px;top:183.60px;width:52.70px;height:2.00px;background:#c6c6c6;"></div>
<div style="position:absolute;left:711.60px;top:171.30px;width:2.00px;height:14.30px;background:#c6c6c6;"></div>
<div style="position:absolute;left:660.90px;top:171.30px;width:50.70px;height:12.30px;background:#d7d7d7;"></div>
<div class="t" style="right:654.5px;top:171.30px;font-size:8.20px;line-height:12px;color:#262626;-webkit-text-stroke:0.1px #262626">7</div>
<div class="t" style="left:254.60px;top:171.60px;font-size:9px;line-height:12px;color:#141414;transform:scaleX(0.920);transform-origin:left center;">AIN7</div>
<div class="t" style="left:419.80px;top:171.60px;font-size:9px;line-height:12px;color:#8e8e8e;transform:scaleX(0.861);transform-origin:left center;">0.000000</div>
<div class="t" style="left:472.00px;top:171.60px;font-size:9px;line-height:12px;color:#141414;">y=h</div>
<div class="t" style="left:661.80px;top:171.60px;font-size:9px;line-height:12px;color:#8e8e8e;transform:scaleX(0.847);transform-origin:left center;">0.000000</div>
<div style="position:absolute;left:251.50px;top:187.10px;width:161.60px;height:16.30px;background:#8a8a8a;"></div>
<div style="position:absolute;left:253.50px;top:201.40px;width:159.60px;height:2.00px;background:#c6c6c6;"></div>
<div style="position:absolute;left:411.10px;top:189.10px;width:2.00px;height:14.30px;background:#c6c6c6;"></div>
<div style="position:absolute;left:253.50px;top:189.10px;width:157.60px;height:12.30px;background:#fbfbfb;"></div>
<div style="position:absolute;left:417.10px;top:187.10px;width:45.80px;height:16.30px;background:#8a8a8a;"></div>
<div style="position:absolute;left:419.10px;top:201.40px;width:43.80px;height:2.00px;background:#c6c6c6;"></div>
<div style="position:absolute;left:460.90px;top:189.10px;width:2.00px;height:14.30px;background:#c6c6c6;"></div>
<div style="position:absolute;left:419.10px;top:189.10px;width:41.80px;height:12.30px;background:#d7d7d7;"></div>
<div style="position:absolute;left:468.90px;top:187.10px;width:183.30px;height:16.30px;background:#8a8a8a;"></div>
<div style="position:absolute;left:470.90px;top:201.40px;width:181.30px;height:2.00px;background:#c6c6c6;"></div>
<div style="position:absolute;left:650.20px;top:189.10px;width:2.00px;height:14.30px;background:#c6c6c6;"></div>
<div style="position:absolute;left:470.90px;top:189.10px;width:179.30px;height:12.30px;background:#fbfbfb;"></div>
<div style="position:absolute;left:658.90px;top:187.10px;width:54.70px;height:16.30px;background:#8a8a8a;"></div>
<div style="position:absolute;left:660.90px;top:201.40px;width:52.70px;height:2.00px;background:#c6c6c6;"></div>
<div style="position:absolute;left:711.60px;top:189.10px;width:2.00px;height:14.30px;background:#c6c6c6;"></div>
<div style="position:absolute;left:660.90px;top:189.10px;width:50.70px;height:12.30px;background:#d7d7d7;"></div>
<div class="t" style="right:654.5px;top:189.10px;font-size:8.40px;line-height:12px;color:#262626;-webkit-text-stroke:0.1px #262626">8</div>
<div class="t" style="left:254.60px;top:189.40px;font-size:9px;line-height:12px;color:#141414;transform:scaleX(0.920);transform-origin:left center;">AIN8</div>
<div class="t" style="left:419.80px;top:189.40px;font-size:9px;line-height:12px;color:#8e8e8e;transform:scaleX(0.861);transform-origin:left center;">0.000000</div>
<div class="t" style="left:472.00px;top:189.40px;font-size:9px;line-height:12px;color:#141414;">y=i</div>
<div class="t" style="left:661.80px;top:189.40px;font-size:9px;line-height:12px;color:#8e8e8e;transform:scaleX(0.847);transform-origin:left center;">0.000000</div>
<div style="position:absolute;left:251.50px;top:204.90px;width:161.60px;height:16.30px;background:#8a8a8a;"></div>
<div style="position:absolute;left:253.50px;top:219.20px;width:159.60px;height:2.00px;background:#c6c6c6;"></div>
<div style="position:absolute;left:411.10px;top:206.90px;width:2.00px;height:14.30px;background:#c6c6c6;"></div>
<div style="position:absolute;left:253.50px;top:206.90px;width:157.60px;height:12.30px;background:#fbfbfb;"></div>
<div style="position:absolute;left:417.10px;top:204.90px;width:45.80px;height:16.30px;background:#8a8a8a;"></div>
<div style="position:absolute;left:419.10px;top:219.20px;width:43.80px;height:2.00px;background:#c6c6c6;"></div>
<div style="position:absolute;left:460.90px;top:206.90px;width:2.00px;height:14.30px;background:#c6c6c6;"></div>
<div style="position:absolute;left:419.10px;top:206.90px;width:41.80px;height:12.30px;background:#d7d7d7;"></div>
<div style="position:absolute;left:468.90px;top:204.90px;width:183.30px;height:16.30px;background:#8a8a8a;"></div>
<div style="position:absolute;left:470.90px;top:219.20px;width:181.30px;height:2.00px;background:#c6c6c6;"></div>
<div style="position:absolute;left:650.20px;top:206.90px;width:2.00px;height:14.30px;background:#c6c6c6;"></div>
<div style="position:absolute;left:470.90px;top:206.90px;width:179.30px;height:12.30px;background:#fbfbfb;"></div>
<div style="position:absolute;left:658.90px;top:204.90px;width:54.70px;height:16.30px;background:#8a8a8a;"></div>
<div style="position:absolute;left:660.90px;top:219.20px;width:52.70px;height:2.00px;background:#c6c6c6;"></div>
<div style="position:absolute;left:711.60px;top:206.90px;width:2.00px;height:14.30px;background:#c6c6c6;"></div>
<div style="position:absolute;left:660.90px;top:206.90px;width:50.70px;height:12.30px;background:#d7d7d7;"></div>
<div class="t" style="right:654.5px;top:206.90px;font-size:8.60px;line-height:12px;color:#262626;-webkit-text-stroke:0.1px #262626">9</div>
<div class="t" style="left:254.60px;top:207.20px;font-size:9px;line-height:12px;color:#141414;transform:scaleX(0.920);transform-origin:left center;">AIN9</div>
<div class="t" style="left:419.80px;top:207.20px;font-size:9px;line-height:12px;color:#8e8e8e;transform:scaleX(0.861);transform-origin:left center;">0.000000</div>
<div class="t" style="left:472.00px;top:207.20px;font-size:9px;line-height:12px;color:#141414;">y=j</div>
<div class="t" style="left:661.80px;top:207.20px;font-size:9px;line-height:12px;color:#8e8e8e;transform:scaleX(0.847);transform-origin:left center;">0.000000</div>
<div style="position:absolute;left:251.50px;top:222.70px;width:161.60px;height:16.30px;background:#8a8a8a;"></div>
<div style="position:absolute;left:253.50px;top:237.00px;width:159.60px;height:2.00px;background:#c6c6c6;"></div>
<div style="position:absolute;left:411.10px;top:224.70px;width:2.00px;height:14.30px;background:#c6c6c6;"></div>
<div style="position:absolute;left:253.50px;top:224.70px;width:157.60px;height:12.30px;background:#fbfbfb;"></div>
<div style="position:absolute;left:417.10px;top:222.70px;width:45.80px;height:16.30px;background:#8a8a8a;"></div>
<div style="position:absolute;left:419.10px;top:237.00px;width:43.80px;height:2.00px;background:#c6c6c6;"></div>
<div style="position:absolute;left:460.90px;top:224.70px;width:2.00px;height:14.30px;background:#c6c6c6;"></div>
<div style="position:absolute;left:419.10px;top:224.70px;width:41.80px;height:12.30px;background:#d7d7d7;"></div>
<div style="position:absolute;left:468.90px;top:222.70px;width:183.30px;height:16.30px;background:#8a8a8a;"></div>
<div style="position:absolute;left:470.90px;top:237.00px;width:181.30px;height:2.00px;background:#c6c6c6;"></div>
<div style="position:absolute;left:650.20px;top:224.70px;width:2.00px;height:14.30px;background:#c6c6c6;"></div>
<div style="position:absolute;left:470.90px;top:224.70px;width:179.30px;height:12.30px;background:#fbfbfb;"></div>
<div style="position:absolute;left:658.90px;top:222.70px;width:54.70px;height:16.30px;background:#8a8a8a;"></div>
<div style="position:absolute;left:660.90px;top:237.00px;width:52.70px;height:2.00px;background:#c6c6c6;"></div>
<div style="position:absolute;left:711.60px;top:224.70px;width:2.00px;height:14.30px;background:#c6c6c6;"></div>
<div style="position:absolute;left:660.90px;top:224.70px;width:50.70px;height:12.30px;background:#d7d7d7;"></div>
<div class="t" style="right:654.5px;top:224.70px;font-size:8.80px;line-height:12px;color:#262626;-webkit-text-stroke:0.1px #262626">10</div>
<div class="t" style="left:254.60px;top:225.00px;font-size:9px;line-height:12px;color:#141414;transform:scaleX(0.896);transform-origin:left center;">AIN10</div>
<div class="t" style="left:419.80px;top:225.00px;font-size:9px;line-height:12px;color:#8e8e8e;transform:scaleX(0.861);transform-origin:left center;">0.000000</div>
<div class="t" style="left:472.00px;top:225.00px;font-size:9px;line-height:12px;color:#141414;">y=k</div>
<div class="t" style="left:661.80px;top:225.00px;font-size:9px;line-height:12px;color:#8e8e8e;transform:scaleX(0.847);transform-origin:left center;">0.000000</div>
<div style="position:absolute;left:251.50px;top:240.50px;width:161.60px;height:16.30px;background:#8a8a8a;"></div>
<div style="position:absolute;left:253.50px;top:254.80px;width:159.60px;height:2.00px;background:#c6c6c6;"></div>
<div style="position:absolute;left:411.10px;top:242.50px;width:2.00px;height:14.30px;background:#c6c6c6;"></div>
<div style="position:absolute;left:253.50px;top:242.50px;width:157.60px;height:12.30px;background:#fbfbfb;"></div>
<div style="position:absolute;left:417.10px;top:240.50px;width:45.80px;height:16.30px;background:#8a8a8a;"></div>
<div style="position:absolute;left:419.10px;top:254.80px;width:43.80px;height:2.00px;background:#c6c6c6;"></div>
<div style="position:absolute;left:460.90px;top:242.50px;width:2.00px;height:14.30px;background:#c6c6c6;"></div>
<div style="position:absolute;left:419.10px;top:242.50px;width:41.80px;height:12.30px;background:#d7d7d7;"></div>
<div style="position:absolute;left:468.90px;top:240.50px;width:183.30px;height:16.30px;background:#8a8a8a;"></div>
<div style="position:absolute;left:470.90px;top:254.80px;width:181.30px;height:2.00px;background:#c6c6c6;"></div>
<div style="position:absolute;left:650.20px;top:242.50px;width:2.00px;height:14.30px;background:#c6c6c6;"></div>
<div style="position:absolute;left:470.90px;top:242.50px;width:179.30px;height:12.30px;background:#fbfbfb;"></div>
<div style="position:absolute;left:658.90px;top:240.50px;width:54.70px;height:16.30px;background:#8a8a8a;"></div>
<div style="position:absolute;left:660.90px;top:254.80px;width:52.70px;height:2.00px;background:#c6c6c6;"></div>
<div style="position:absolute;left:711.60px;top:242.50px;width:2.00px;height:14.30px;background:#c6c6c6;"></div>
<div style="position:absolute;left:660.90px;top:242.50px;width:50.70px;height:12.30px;background:#d7d7d7;"></div>
<div class="t" style="right:654.5px;top:242.50px;font-size:8.80px;line-height:12px;color:#262626;-webkit-text-stroke:0.1px #262626">11</div>
<div class="t" style="left:254.60px;top:242.80px;font-size:9px;line-height:12px;color:#141414;transform:scaleX(0.920);transform-origin:left center;">AIN11</div>
<div class="t" style="left:419.80px;top:242.80px;font-size:9px;line-height:12px;color:#8e8e8e;transform:scaleX(0.861);transform-origin:left center;">0.000000</div>
<div class="t" style="left:472.00px;top:242.80px;font-size:9px;line-height:12px;color:#141414;">y=l</div>
<div class="t" style="left:661.80px;top:242.80px;font-size:9px;line-height:12px;color:#8e8e8e;transform:scaleX(0.847);transform-origin:left center;">0.000000</div>
<div style="position:absolute;left:251.50px;top:258.30px;width:161.60px;height:16.30px;background:#8a8a8a;"></div>
<div style="position:absolute;left:253.50px;top:272.60px;width:159.60px;height:2.00px;background:#c6c6c6;"></div>
<div style="position:absolute;left:411.10px;top:260.30px;width:2.00px;height:14.30px;background:#c6c6c6;"></div>
<div style="position:absolute;left:253.50px;top:260.30px;width:157.60px;height:12.30px;background:#fbfbfb;"></div>
<div style="position:absolute;left:417.10px;top:258.30px;width:45.80px;height:16.30px;background:#8a8a8a;"></div>
<div style="position:absolute;left:419.10px;top:272.60px;width:43.80px;height:2.00px;background:#c6c6c6;"></div>
<div style="position:absolute;left:460.90px;top:260.30px;width:2.00px;height:14.30px;background:#c6c6c6;"></div>
<div style="position:absolute;left:419.10px;top:260.30px;width:41.80px;height:12.30px;background:#d7d7d7;"></div>
<div style="position:absolute;left:468.90px;top:258.30px;width:183.30px;height:16.30px;background:#8a8a8a;"></div>
<div style="position:absolute;left:470.90px;top:272.60px;width:181.30px;height:2.00px;background:#c6c6c6;"></div>
<div style="position:absolute;left:650.20px;top:260.30px;width:2.00px;height:14.30px;background:#c6c6c6;"></div>
<div style="position:absolute;left:470.90px;top:260.30px;width:179.30px;height:12.30px;background:#fbfbfb;"></div>
<div style="position:absolute;left:658.90px;top:258.30px;width:54.70px;height:16.30px;background:#8a8a8a;"></div>
<div style="position:absolute;left:660.90px;top:272.60px;width:52.70px;height:2.00px;background:#c6c6c6;"></div>
<div style="position:absolute;left:711.60px;top:260.30px;width:2.00px;height:14.30px;background:#c6c6c6;"></div>
<div style="position:absolute;left:660.90px;top:260.30px;width:50.70px;height:12.30px;background:#d7d7d7;"></div>
<div class="t" style="right:654.5px;top:260.30px;font-size:8.80px;line-height:12px;color:#262626;-webkit-text-stroke:0.1px #262626">12</div>
<div class="t" style="left:254.60px;top:260.60px;font-size:9px;line-height:12px;color:#141414;transform:scaleX(0.896);transform-origin:left center;">AIN12</div>
<div class="t" style="left:419.80px;top:260.60px;font-size:9px;line-height:12px;color:#8e8e8e;transform:scaleX(0.861);transform-origin:left center;">0.000000</div>
<div class="t" style="left:472.00px;top:260.60px;font-size:9px;line-height:12px;color:#141414;">y=m</div>
<div class="t" style="left:661.80px;top:260.60px;font-size:9px;line-height:12px;color:#8e8e8e;transform:scaleX(0.847);transform-origin:left center;">0.000000</div>
<div style="position:absolute;left:251.50px;top:276.10px;width:161.60px;height:16.30px;background:#8a8a8a;"></div>
<div style="position:absolute;left:253.50px;top:290.40px;width:159.60px;height:2.00px;background:#c6c6c6;"></div>
<div style="position:absolute;left:411.10px;top:278.10px;width:2.00px;height:14.30px;background:#c6c6c6;"></div>
<div style="position:absolute;left:253.50px;top:278.10px;width:157.60px;height:12.30px;background:#fbfbfb;"></div>
<div style="position:absolute;left:417.10px;top:276.10px;width:45.80px;height:16.30px;background:#8a8a8a;"></div>
<div style="position:absolute;left:419.10px;top:290.40px;width:43.80px;height:2.00px;background:#c6c6c6;"></div>
<div style="position:absolute;left:460.90px;top:278.10px;width:2.00px;height:14.30px;background:#c6c6c6;"></div>
<div style="position:absolute;left:419.10px;top:278.10px;width:41.80px;height:12.30px;background:#d7d7d7;"></div>
<div style="position:absolute;left:468.90px;top:276.10px;width:183.30px;height:16.30px;background:#8a8a8a;"></div>
<div style="position:absolute;left:470.90px;top:290.40px;width:181.30px;height:2.00px;background:#c6c6c6;"></div>
<div style="position:absolute;left:650.20px;top:278.10px;width:2.00px;height:14.30px;background:#c6c6c6;"></div>
<div style="position:absolute;left:470.90px;top:278.10px;width:179.30px;height:12.30px;background:#fbfbfb;"></div>
<div style="position:absolute;left:658.90px;top:276.10px;width:54.70px;height:16.30px;background:#8a8a8a;"></div>
<div style="position:absolute;left:660.90px;top:290.40px;width:52.70px;height:2.00px;background:#c6c6c6;"></div>
<div style="position:absolute;left:711.60px;top:278.10px;width:2.00px;height:14.30px;background:#c6c6c6;"></div>
<div style="position:absolute;left:660.90px;top:278.10px;width:50.70px;height:12.30px;background:#d7d7d7;"></div>
<div class="t" style="right:654.5px;top:278.10px;font-size:8.80px;line-height:12px;color:#262626;-webkit-text-stroke:0.1px #262626">13</div>
<div class="t" style="left:254.60px;top:278.40px;font-size:9px;line-height:12px;color:#141414;transform:scaleX(0.896);transform-origin:left center;">AIN13</div>
<div class="t" style="left:419.80px;top:278.40px;font-size:9px;line-height:12px;color:#8e8e8e;transform:scaleX(0.861);transform-origin:left center;">0.000000</div>
<div class="t" style="left:472.00px;top:278.40px;font-size:9px;line-height:12px;color:#141414;">y=n</div>
<div class="t" style="left:661.80px;top:278.40px;font-size:9px;line-height:12px;color:#8e8e8e;transform:scaleX(0.847);transform-origin:left center;">0.000000</div>
<div style="position:absolute;left:251.50px;top:293.90px;width:161.60px;height:16.30px;background:#8a8a8a;"></div>
<div style="position:absolute;left:253.50px;top:308.20px;width:159.60px;height:2.00px;background:#c6c6c6;"></div>
<div style="position:absolute;left:411.10px;top:295.90px;width:2.00px;height:14.30px;background:#c6c6c6;"></div>
<div style="position:absolute;left:253.50px;top:295.90px;width:157.60px;height:12.30px;background:#fbfbfb;"></div>
<div style="position:absolute;left:417.10px;top:293.90px;width:45.80px;height:16.30px;background:#8a8a8a;"></div>
<div style="position:absolute;left:419.10px;top:308.20px;width:43.80px;height:2.00px;background:#c6c6c6;"></div>
<div style="position:absolute;left:460.90px;top:295.90px;width:2.00px;height:14.30px;background:#c6c6c6;"></div>
<div style="position:absolute;left:419.10px;top:295.90px;width:41.80px;height:12.30px;background:#d7d7d7;"></div>
<div style="position:absolute;left:468.90px;top:293.90px;width:183.30px;height:16.30px;background:#8a8a8a;"></div>
<div style="position:absolute;left:470.90px;top:308.20px;width:181.30px;height:2.00px;background:#c6c6c6;"></div>
<div style="position:absolute;left:650.20px;top:295.90px;width:2.00px;height:14.30px;background:#c6c6c6;"></div>
<div style="position:absolute;left:470.90px;top:295.90px;width:179.30px;height:12.30px;background:#fbfbfb;"></div>
<div style="position:absolute;left:658.90px;top:293.90px;width:54.70px;height:16.30px;background:#8a8a8a;"></div>
<div style="position:absolute;left:660.90px;top:308.20px;width:52.70px;height:2.00px;background:#c6c6c6;"></div>
<div style="position:absolute;left:711.60px;top:295.90px;width:2.00px;height:14.30px;background:#c6c6c6;"></div>
<div style="position:absolute;left:660.90px;top:295.90px;width:50.70px;height:12.30px;background:#d7d7d7;"></div>
<div class="t" style="right:654.5px;top:295.90px;font-size:8.80px;line-height:12px;color:#262626;-webkit-text-stroke:0.1px #262626">14</div>
<div class="t" style="left:254.60px;top:296.20px;font-size:9px;line-height:12px;color:#141414;transform:scaleX(0.896);transform-origin:left center;">AIN14</div>
<div class="t" style="left:419.80px;top:296.20px;font-size:9px;line-height:12px;color:#8e8e8e;transform:scaleX(0.861);transform-origin:left center;">0.000000</div>
<div class="t" style="left:472.00px;top:296.20px;font-size:9px;line-height:12px;color:#141414;">y=o</div>
<div class="t" style="left:661.80px;top:296.20px;font-size:9px;line-height:12px;color:#8e8e8e;transform:scaleX(0.847);transform-origin:left center;">0.000000</div>
<div style="position:absolute;left:251.50px;top:311.70px;width:161.60px;height:16.30px;background:#8a8a8a;"></div>
<div style="position:absolute;left:253.50px;top:326.00px;width:159.60px;height:2.00px;background:#c6c6c6;"></div>
<div style="position:absolute;left:411.10px;top:313.70px;width:2.00px;height:14.30px;background:#c6c6c6;"></div>
<div style="position:absolute;left:253.50px;top:313.70px;width:157.60px;height:12.30px;background:#fbfbfb;"></div>
<div style="position:absolute;left:417.10px;top:311.70px;width:45.80px;height:16.30px;background:#8a8a8a;"></div>
<div style="position:absolute;left:419.10px;top:326.00px;width:43.80px;height:2.00px;background:#c6c6c6;"></div>
<div style="position:absolute;left:460.90px;top:313.70px;width:2.00px;height:14.30px;background:#c6c6c6;"></div>
<div style="position:absolute;left:419.10px;top:313.70px;width:41.80px;height:12.30px;background:#d7d7d7;"></div>
<div style="position:absolute;left:468.90px;top:311.70px;width:183.30px;height:16.30px;background:#8a8a8a;"></div>
<div style="position:absolute;left:470.90px;top:326.00px;width:181.30px;height:2.00px;background:#c6c6c6;"></div>
<div style="position:absolute;left:650.20px;top:313.70px;width:2.00px;height:14.30px;background:#c6c6c6;"></div>
<div style="position:absolute;left:470.90px;top:313.70px;width:179.30px;height:12.30px;background:#fbfbfb;"></div>
<div style="position:absolute;left:658.90px;top:311.70px;width:54.70px;height:16.30px;background:#8a8a8a;"></div>
<div style="position:absolute;left:660.90px;top:326.00px;width:52.70px;height:2.00px;background:#c6c6c6;"></div>
<div style="position:absolute;left:711.60px;top:313.70px;width:2.00px;height:14.30px;background:#c6c6c6;"></div>
<div style="position:absolute;left:660.90px;top:313.70px;width:50.70px;height:12.30px;background:#d7d7d7;"></div>
<div class="t" style="right:654.5px;top:313.70px;font-size:8.80px;line-height:12px;color:#262626;-webkit-text-stroke:0.1px #262626">15</div>
<div class="t" style="left:254.60px;top:314.00px;font-size:9px;line-height:12px;color:#141414;transform:scaleX(0.896);transform-origin:left center;">AIN15</div>
<div class="t" style="left:419.80px;top:314.00px;font-size:9px;line-height:12px;color:#8e8e8e;transform:scaleX(0.861);transform-origin:left center;">0.000000</div>
<div class="t" style="left:472.00px;top:314.00px;font-size:9px;line-height:12px;color:#141414;">y=p</div>
<div class="t" style="left:661.80px;top:314.00px;font-size:9px;line-height:12px;color:#8e8e8e;transform:scaleX(0.847);transform-origin:left center;">0.000000</div>
<div style="position:absolute;left:717.60px;top:41.00px;width:20.00px;height:289.00px;background:#c2c2c5;border-top:3px solid #a2a2a2;border-left:2.5px solid #9a9a9a;border-right:2px solid #cdcdcd;border-bottom:2px solid #cdcdcd;box-sizing:border-box;"></div>
<div style="position:absolute;left:722.10px;top:46.40px;width:12.4px;height:12.4px;border-radius:50%;background:radial-gradient(circle at 38% 34%, #8cff60 0%, #5cf02a 45%, #3cb018 92%, #2a8010 100%);box-shadow:0.9px 0.9px 0.3px #ececec"></div>
<div style="position:absolute;left:722.10px;top:64.20px;width:12.4px;height:12.4px;border-radius:50%;background:radial-gradient(circle at 38% 34%, #8cff60 0%, #5cf02a 45%, #3cb018 92%, #2a8010 100%);box-shadow:0.9px 0.9px 0.3px #ececec"></div>
<div style="position:absolute;left:722.10px;top:82.00px;width:12.4px;height:12.4px;border-radius:50%;background:radial-gradient(circle at 34% 30%, #6a9a5a 0%, #2c5a1e 30%, #1a4010 60%, #0a2206 100%);box-shadow:0.9px 0.9px 0.3px #ececec"></div>
<div style="position:absolute;left:722.10px;top:99.80px;width:12.4px;height:12.4px;border-radius:50%;background:radial-gradient(circle at 34% 30%, #6a9a5a 0%, #2c5a1e 30%, #1a4010 60%, #0a2206 100%);box-shadow:0.9px 0.9px 0.3px #ececec"></div>
<div style="position:absolute;left:722.10px;top:117.60px;width:12.4px;height:12.4px;border-radius:50%;background:radial-gradient(circle at 34% 30%, #6a9a5a 0%, #2c5a1e 30%, #1a4010 60%, #0a2206 100%);box-shadow:0.9px 0.9px 0.3px #ececec"></div>
<div style="position:absolute;left:722.10px;top:135.40px;width:12.4px;height:12.4px;border-radius:50%;background:radial-gradient(circle at 34% 30%, #6a9a5a 0%, #2c5a1e 30%, #1a4010 60%, #0a2206 100%);box-shadow:0.9px 0.9px 0.3px #ececec"></div>
<div style="position:absolute;left:722.10px;top:153.20px;width:12.4px;height:12.4px;border-radius:50%;background:radial-gradient(circle at 34% 30%, #6a9a5a 0%, #2c5a1e 30%, #1a4010 60%, #0a2206 100%);box-shadow:0.9px 0.9px 0.3px #ececec"></div>
<div style="position:absolute;left:722.10px;top:171.00px;width:12.4px;height:12.4px;border-radius:50%;background:radial-gradient(circle at 34% 30%, #6a9a5a 0%, #2c5a1e 30%, #1a4010 60%, #0a2206 100%);box-shadow:0.9px 0.9px 0.3px #ececec"></div>
<div style="position:absolute;left:722.10px;top:188.80px;width:12.4px;height:12.4px;border-radius:50%;background:radial-gradient(circle at 34% 30%, #6a9a5a 0%, #2c5a1e 30%, #1a4010 60%, #0a2206 100%);box-shadow:0.9px 0.9px 0.3px #ececec"></div>
<div style="position:absolute;left:722.10px;top:206.60px;width:12.4px;height:12.4px;border-radius:50%;background:radial-gradient(circle at 34% 30%, #6a9a5a 0%, #2c5a1e 30%, #1a4010 60%, #0a2206 100%);box-shadow:0.9px 0.9px 0.3px #ececec"></div>
<div style="position:absolute;left:722.10px;top:224.40px;width:12.4px;height:12.4px;border-radius:50%;background:radial-gradient(circle at 34% 30%, #6a9a5a 0%, #2c5a1e 30%, #1a4010 60%, #0a2206 100%);box-shadow:0.9px 0.9px 0.3px #ececec"></div>
<div style="position:absolute;left:722.10px;top:242.20px;width:12.4px;height:12.4px;border-radius:50%;background:radial-gradient(circle at 34% 30%, #6a9a5a 0%, #2c5a1e 30%, #1a4010 60%, #0a2206 100%);box-shadow:0.9px 0.9px 0.3px #ececec"></div>
<div style="position:absolute;left:722.10px;top:260.00px;width:12.4px;height:12.4px;border-radius:50%;background:radial-gradient(circle at 34% 30%, #6a9a5a 0%, #2c5a1e 30%, #1a4010 60%, #0a2206 100%);box-shadow:0.9px 0.9px 0.3px #ececec"></div>
<div style="position:absolute;left:722.10px;top:277.80px;width:12.4px;height:12.4px;border-radius:50%;background:radial-gradient(circle at 34% 30%, #6a9a5a 0%, #2c5a1e 30%, #1a4010 60%, #0a2206 100%);box-shadow:0.9px 0.9px 0.3px #ececec"></div>
<div style="position:absolute;left:722.10px;top:295.60px;width:12.4px;height:12.4px;border-radius:50%;background:radial-gradient(circle at 34% 30%, #6a9a5a 0%, #2c5a1e 30%, #1a4010 60%, #0a2206 100%);box-shadow:0.9px 0.9px 0.3px #ececec"></div>
<div style="position:absolute;left:722.10px;top:313.40px;width:12.4px;height:12.4px;border-radius:50%;background:radial-gradient(circle at 34% 30%, #6a9a5a 0%, #2c5a1e 30%, #1a4010 60%, #0a2206 100%);box-shadow:0.9px 0.9px 0.3px #ececec"></div>
<div class="t" style="left:446.30px;top:334.50px;font-size:9px;line-height:12px;color:#141414;transform:scaleX(0.870);transform-origin:left center;">Max File Size (Bytes)</div>
<svg style="position:absolute;left:439px;top:348.5px" width="8" height="14.5" viewBox="0 0 8 14.5"><ellipse cx="4" cy="7.25" rx="3.4" ry="6.65" fill="#e2e2e2" stroke="#8a8a8a" stroke-width="1"/><path d="M2.5 5.95 L4 3.25 L5.5 5.95 M2.5 8.55 L4 11.25 L5.5 8.55" stroke="#5a5a5a" stroke-width="0.9" fill="none"/></svg>
<div style="position:absolute;left:446.00px;top:347.50px;width:63.00px;height:16.50px;background:#8c8c8c;"></div>
<div style="position:absolute;left:448.00px;top:362.00px;width:61.00px;height:2.00px;background:#d0d0d0;"></div>
<div style="position:absolute;left:507.00px;top:349.50px;width:2.00px;height:14.50px;background:#d0d0d0;"></div>
<div style="position:absolute;left:448.00px;top:349.50px;width:59.00px;height:12.50px;background:#fbfbfb;"></div>
<div class="t" style="left:449.00px;top:349.70px;font-size:9px;line-height:12px;color:#141414;transform:scaleX(0.856);transform-origin:left center;">1048576</div>
<div style="position:absolute;left:440.40px;top:366.50px;width:106.60px;height:14.00px;background:linear-gradient(#dcdcdc,#c8c8c8);border:1.2px solid #4a4a4a;box-sizing:border-box;box-shadow:inset 1px 1px 0 #eeeeee, inset -2px -1px 0 #8e8e8e;"></div>
<div class="t" style="left:293.50px;width:400px;text-align:center;top:367.60px;font-size:9px;line-height:12px;color:#141414;transform:scaleX(0.949);transform-origin:center center;">Change Working Directory</div>
<div class="t" style="left:569.80px;top:335.30px;font-size:9px;line-height:12px;color:#141414;transform:scaleX(0.966);transform-origin:left center;">-The input voltage is &quot;a&quot; - &quot;p&quot; corresponding</div>
<div class="t" style="left:574.50px;top:345.80px;font-size:9px;line-height:12px;color:#141414;transform:scaleX(0.942);transform-origin:left center;">to the 1st through 8th row.</div>
<div class="t" style="left:569.80px;top:356.30px;font-size:9px;line-height:12px;color:#141414;transform:scaleX(0.945);transform-origin:left center;">-The scaled output value is &quot;y&quot;.</div>
<div class="t" style="left:569.80px;top:366.80px;font-size:9px;line-height:12px;color:#141414;transform:scaleX(0.959);transform-origin:left center;">-If your equation has an error, the output</div>
<div class="t" style="left:574.50px;top:377.30px;font-size:9px;line-height:12px;color:#141414;transform:scaleX(0.932);transform-origin:left center;">will be zero.</div>
<div class="t" style="left:458.90px;top:394.50px;font-size:9px;line-height:12px;color:#141414;transform:scaleX(0.919);transform-origin:left center;">Graph History</div>
<svg style="position:absolute;left:451px;top:406.5px" width="8" height="15.5" viewBox="0 0 8 15.5"><ellipse cx="4" cy="7.75" rx="3.4" ry="7.15" fill="#e2e2e2" stroke="#8a8a8a" stroke-width="1"/><path d="M2.5 6.45 L4 3.75 L5.5 6.45 M2.5 9.05 L4 11.75 L5.5 9.05" stroke="#5a5a5a" stroke-width="0.9" fill="none"/></svg>
<div style="position:absolute;left:458.70px;top:407.00px;width:41.60px;height:16.00px;background:#8c8c8c;"></div>
<div style="position:absolute;left:460.70px;top:421.00px;width:39.60px;height:2.00px;background:#d0d0d0;"></div>
<div style="position:absolute;left:498.30px;top:409.00px;width:2.00px;height:14.00px;background:#d0d0d0;"></div>
<div style="position:absolute;left:460.70px;top:409.00px;width:37.60px;height:12.00px;background:#fbfbfb;"></div>
<div class="t" style="left:461.30px;top:409.30px;font-size:9px;line-height:12px;color:#141414;transform:scaleX(0.846);transform-origin:left center;">300</div>
<div class="t" style="left:502.50px;top:408.60px;font-size:9px;line-height:12px;color:#141414;transform:scaleX(0.887);transform-origin:left center;"># scans</div>
<div class="t" style="left:559.30px;top:396.00px;font-size:9px;line-height:12px;color:#141414;transform:scaleX(0.957);transform-origin:left center;"># of iterations</div>
<div style="position:absolute;left:559.00px;top:409.30px;width:48.50px;height:14.00px;background:#8c8c8c;"></div>
<div style="position:absolute;left:561.00px;top:421.30px;width:46.50px;height:2.00px;background:#d0d0d0;"></div>
<div style="position:absolute;left:605.50px;top:411.30px;width:2.00px;height:12.00px;background:#d0d0d0;"></div>
<div style="position:absolute;left:561.00px;top:411.30px;width:44.50px;height:10.00px;background:#dedede;"></div>
<div class="t" style="left:562.10px;top:410.50px;font-size:9px;line-height:12px;color:#141414;transform:scaleX(0.866);transform-origin:left center;">660</div>
<div class="t" style="left:623.50px;top:396.00px;font-size:9px;line-height:12px;color:#141414;transform:scaleX(0.940);transform-origin:left center;">ms per iteration</div>
<div style="position:absolute;left:623.00px;top:409.30px;width:53.50px;height:14.00px;background:#8c8c8c;"></div>
<div style="position:absolute;left:625.00px;top:421.30px;width:51.50px;height:2.00px;background:#d0d0d0;"></div>
<div style="position:absolute;left:674.50px;top:411.30px;width:2.00px;height:12.00px;background:#d0d0d0;"></div>
<div style="position:absolute;left:625.00px;top:411.30px;width:49.50px;height:10.00px;background:#dedede;"></div>
<div class="t" style="left:625.80px;top:410.50px;font-size:9px;line-height:12px;color:#141414;transform:scaleX(0.899);transform-origin:left center;">50</div>
<div style="position:absolute;left:138.00px;top:429.00px;width:552.00px;height:230.00px;background:#c9c9c9;border-top:2px solid #e0e0e0;border-left:2px solid #e6e6e6;border-right:2px solid #707070;border-bottom:1.5px solid #7c7c7c;box-sizing:border-box;"></div>
<div style="position:absolute;left:140.00px;top:431.00px;width:7.00px;height:225.00px;background:#dadada;"></div>
<div style="position:absolute;left:681.00px;top:431.00px;width:7.00px;height:225.00px;background:linear-gradient(90deg,#cfcfcf,#b8b8b8 50%,#8a8a8a);"></div>
<div style="position:absolute;left:147.00px;top:431.00px;width:1.00px;height:225.00px;background:#bdbdbd;"></div>
<svg style="position:absolute;left:184px;top:436px" width="489" height="193" viewBox="0 0 489 193"><rect width="489" height="193" fill="#000"/><line x1="6.5" y1="0" x2="6.5" y2="193" stroke="#142216" stroke-width="1"/><line x1="13.5" y1="0" x2="13.5" y2="193" stroke="#142216" stroke-width="1"/><line x1="20.5" y1="0" x2="20.5" y2="193" stroke="#142216" stroke-width="1"/><line x1="26.5" y1="0" x2="26.5" y2="193" stroke="#142216" stroke-width="1"/><line x1="39.5" y1="0" x2="39.5" y2="193" stroke="#142216" stroke-width="1"/><line x1="46.5" y1="0" x2="46.5" y2="193" stroke="#142216" stroke-width="1"/><line x1="52.5" y1="0" x2="52.5" y2="193" stroke="#142216" stroke-width="1"/><line x1="58.5" y1="0" x2="58.5" y2="193" stroke="#142216" stroke-width="1"/><line x1="72.5" y1="0" x2="72.5" y2="193" stroke="#142216" stroke-width="1"/><line x1="78.5" y1="0" x2="78.5" y2="193" stroke="#142216" stroke-width="1"/><line x1="84.5" y1="0" x2="84.5" y2="193" stroke="#142216" stroke-width="1"/><line x1="91.5" y1="0" x2="91.5" y2="193" stroke="#142216" stroke-width="1"/><line x1="104.5" y1="0" x2="104.5" y2="193" stroke="#142216" stroke-width="1"/><line x1="110.5" y1="0" x2="110.5" y2="193" stroke="#142216" stroke-width="1"/><line x1="117.5" y1="0" x2="117.5" y2="193" stroke="#142216" stroke-width="1"/><line x1="124.5" y1="0" x2="124.5" y2="193" stroke="#142216" stroke-width="1"/><line x1="136.5" y1="0" x2="136.5" y2="193" stroke="#142216" stroke-width="1"/><line x1="143.5" y1="0" x2="143.5" y2="193" stroke="#142216" stroke-width="1"/><line x1="150.5" y1="0" x2="150.5" y2="193" stroke="#142216" stroke-width="1"/><line x1="156.5" y1="0" x2="156.5" y2="193" stroke="#142216" stroke-width="1"/><line x1="169.5" y1="0" x2="169.5" y2="193" stroke="#142216" stroke-width="1"/><line x1="176.5" y1="0" x2="176.5" y2="193" stroke="#142216" stroke-width="1"/><line x1="182.5" y1="0" x2="182.5" y2="193" stroke="#142216" stroke-width="1"/><line x1="188.5" y1="0" x2="188.5" y2="193" stroke="#142216" stroke-width="1"/><line x1="202.5" y1="0" x2="202.5" y2="193" stroke="#142216" stroke-width="1"/><line x1="208.5" y1="0" x2="208.5" y2="193" stroke="#142216" stroke-width="1"/><line x1="214.5" y1="0" x2="214.5" y2="193" stroke="#142216" stroke-width="1"/><line x1="221.5" y1="0" x2="221.5" y2="193" stroke="#142216" stroke-width="1"/><line x1="234.5" y1="0" x2="234.5" y2="193" stroke="#142216" stroke-width="1"/><line x1="240.5" y1="0" x2="240.5" y2="193" stroke="#142216" stroke-width="1"/><line x1="247.5" y1="0" x2="247.5" y2="193" stroke="#142216" stroke-width="1"/><line x1="254.5" y1="0" x2="254.5" y2="193" stroke="#142216" stroke-width="1"/><line x1="266.5" y1="0" x2="266.5" y2="193" stroke="#142216" stroke-width="1"/><line x1="273.5" y1="0" x2="273.5" y2="193" stroke="#142216" stroke-width="1"/><line x1="280.5" y1="0" x2="280.5" y2="193" stroke="#142216" stroke-width="1"/><line x1="286.5" y1="0" x2="286.5" y2="193" stroke="#142216" stroke-width="1"/><line x1="299.5" y1="0" x2="299.5" y2="193" stroke="#142216" stroke-width="1"/><line x1="306.5" y1="0" x2="306.5" y2="193" stroke="#142216" stroke-width="1"/><line x1="312.5" y1="0" x2="312.5" y2="193" stroke="#142216" stroke-width="1"/><line x1="318.5" y1="0" x2="318.5" y2="193" stroke="#142216" stroke-width="1"/><line x1="332.5" y1="0" x2="332.5" y2="193" stroke="#142216" stroke-width="1"/><line x1="338.5" y1="0" x2="338.5" y2="193" stroke="#142216" stroke-width="1"/><line x1="344.5" y1="0" x2="344.5" y2="193" stroke="#142216" stroke-width="1"/><line x1="351.5" y1="0" x2="351.5" y2="193" stroke="#142216" stroke-width="1"/><line x1="364.5" y1="0" x2="364.5" y2="193" stroke="#142216" stroke-width="1"/><line x1="370.5" y1="0" x2="370.5" y2="193" stroke="#142216" stroke-width="1"/><line x1="377.5" y1="0" x2="377.5" y2="193" stroke="#142216" stroke-width="1"/><line x1="384.5" y1="0" x2="384.5" y2="193" stroke="#142216" stroke-width="1"/><line x1="396.5" y1="0" x2="396.5" y2="193" stroke="#142216" stroke-width="1"/><line x1="403.5" y1="0" x2="403.5" y2="193" stroke="#142216" stroke-width="1"/><line x1="410.5" y1="0" x2="410.5" y2="193" stroke="#142216" stroke-width="1"/><line x1="416.5" y1="0" x2="416.5" y2="193" stroke="#142216" stroke-width="1"/><line x1="429.5" y1="0" x2="429.5" y2="193" stroke="#142216" stroke-width="1"/><line x1="436.5" y1="0" x2="436.5" y2="193" stroke="#142216" stroke-width="1"/><line x1="442.5" y1="0" x2="442.5" y2="193" stroke="#142216" stroke-width="1"/><line x1="448.5" y1="0" x2="448.5" y2="193" stroke="#142216" stroke-width="1"/><line x1="462.5" y1="0" x2="462.5" y2="193" stroke="#142216" stroke-width="1"/><line x1="468.5" y1="0" x2="468.5" y2="193" stroke="#142216" stroke-width="1"/><line x1="474.5" y1="0" x2="474.5" y2="193" stroke="#142216" stroke-width="1"/><line x1="481.5" y1="0" x2="481.5" y2="193" stroke="#142216" stroke-width="1"/><line x1="0" y1="189.5" x2="489" y2="189.5" stroke="#121d14" stroke-width="1"/><line x1="0" y1="185.5" x2="489" y2="185.5" stroke="#121d14" stroke-width="1"/><line x1="0" y1="181.5" x2="489" y2="181.5" stroke="#121d14" stroke-width="1"/><line x1="0" y1="177.5" x2="489" y2="177.5" stroke="#121d14" stroke-width="1"/><line x1="0" y1="169.5" x2="489" y2="169.5" stroke="#121d14" stroke-width="1"/><line x1="0" y1="166.5" x2="489" y2="166.5" stroke="#121d14" stroke-width="1"/><line x1="0" y1="162.5" x2="489" y2="162.5" stroke="#121d14" stroke-width="1"/><line x1="0" y1="158.5" x2="489" y2="158.5" stroke="#121d14" stroke-width="1"/><line x1="0" y1="150.5" x2="489" y2="150.5" stroke="#121d14" stroke-width="1"/><line x1="0" y1="146.5" x2="489" y2="146.5" stroke="#121d14" stroke-width="1"/><line x1="0" y1="143.5" x2="489" y2="143.5" stroke="#121d14" stroke-width="1"/><line x1="0" y1="139.5" x2="489" y2="139.5" stroke="#121d14" stroke-width="1"/><line x1="0" y1="131.5" x2="489" y2="131.5" stroke="#121d14" stroke-width="1"/><line x1="0" y1="127.5" x2="489" y2="127.5" stroke="#121d14" stroke-width="1"/><line x1="0" y1="123.5" x2="489" y2="123.5" stroke="#121d14" stroke-width="1"/><line x1="0" y1="120.5" x2="489" y2="120.5" stroke="#121d14" stroke-width="1"/><line x1="0" y1="112.5" x2="489" y2="112.5" stroke="#121d14" stroke-width="1"/><line x1="0" y1="108.5" x2="489" y2="108.5" stroke="#121d14" stroke-width="1"/><line x1="0" y1="104.5" x2="489" y2="104.5" stroke="#121d14" stroke-width="1"/><line x1="0" y1="100.5" x2="489" y2="100.5" stroke="#121d14" stroke-width="1"/><line x1="0" y1="93.5" x2="489" y2="93.5" stroke="#121d14" stroke-width="1"/><line x1="0" y1="89.5" x2="489" y2="89.5" stroke="#121d14" stroke-width="1"/><line x1="0" y1="85.5" x2="489" y2="85.5" stroke="#121d14" stroke-width="1"/><line x1="0" y1="81.5" x2="489" y2="81.5" stroke="#121d14" stroke-width="1"/><line x1="0" y1="74.5" x2="489" y2="74.5" stroke="#121d14" stroke-width="1"/><line x1="0" y1="70.5" x2="489" y2="70.5" stroke="#121d14" stroke-width="1"/><line x1="0" y1="66.5" x2="489" y2="66.5" stroke="#121d14" stroke-width="1"/><line x1="0" y1="62.5" x2="489" y2="62.5" stroke="#121d14" stroke-width="1"/><line x1="0" y1="54.5" x2="489" y2="54.5" stroke="#121d14" stroke-width="1"/><line x1="0" y1="51.5" x2="489" y2="51.5" stroke="#121d14" stroke-width="1"/><line x1="0" y1="47.5" x2="489" y2="47.5" stroke="#121d14" stroke-width="1"/><line x1="0" y1="43.5" x2="489" y2="43.5" stroke="#121d14" stroke-width="1"/><line x1="0" y1="35.5" x2="489" y2="35.5" stroke="#121d14" stroke-width="1"/><line x1="0" y1="31.5" x2="489" y2="31.5" stroke="#121d14" stroke-width="1"/><line x1="0" y1="28.5" x2="489" y2="28.5" stroke="#121d14" stroke-width="1"/><line x1="0" y1="24.5" x2="489" y2="24.5" stroke="#121d14" stroke-width="1"/><line x1="0" y1="16.5" x2="489" y2="16.5" stroke="#121d14" stroke-width="1"/><line x1="0" y1="12.5" x2="489" y2="12.5" stroke="#121d14" stroke-width="1"/><line x1="0" y1="8.5" x2="489" y2="8.5" stroke="#121d14" stroke-width="1"/><line x1="0" y1="5.5" x2="489" y2="5.5" stroke="#121d14" stroke-width="1"/><line x1="32.5" y1="0" x2="32.5" y2="193" stroke="#2a5a30" stroke-width="1.1"/><line x1="65.5" y1="0" x2="65.5" y2="193" stroke="#2a5a30" stroke-width="1.1"/><line x1="98.5" y1="0" x2="98.5" y2="193" stroke="#2a5a30" stroke-width="1.1"/><line x1="130.5" y1="0" x2="130.5" y2="193" stroke="#2a5a30" stroke-width="1.1"/><line x1="162.5" y1="0" x2="162.5" y2="193" stroke="#2a5a30" stroke-width="1.1"/><line x1="195.5" y1="0" x2="195.5" y2="193" stroke="#2a5a30" stroke-width="1.1"/><line x1="228.5" y1="0" x2="228.5" y2="193" stroke="#2a5a30" stroke-width="1.1"/><line x1="260.5" y1="0" x2="260.5" y2="193" stroke="#2a5a30" stroke-width="1.1"/><line x1="292.5" y1="0" x2="292.5" y2="193" stroke="#2a5a30" stroke-width="1.1"/><line x1="325.5" y1="0" x2="325.5" y2="193" stroke="#2a5a30" stroke-width="1.1"/><line x1="358.5" y1="0" x2="358.5" y2="193" stroke="#2a5a30" stroke-width="1.1"/><line x1="390.5" y1="0" x2="390.5" y2="193" stroke="#2a5a30" stroke-width="1.1"/><line x1="422.5" y1="0" x2="422.5" y2="193" stroke="#2a5a30" stroke-width="1.1"/><line x1="455.5" y1="0" x2="455.5" y2="193" stroke="#2a5a30" stroke-width="1.1"/><line x1="0" y1="173.5" x2="489" y2="173.5" stroke="#2e5e34" stroke-width="1.1"/><line x1="0" y1="154.5" x2="489" y2="154.5" stroke="#2e5e34" stroke-width="1.1"/><line x1="0" y1="135.5" x2="489" y2="135.5" stroke="#2e5e34" stroke-width="1.1"/><line x1="0" y1="116.5" x2="489" y2="116.5" stroke="#2e5e34" stroke-width="1.1"/><line x1="0" y1="97.5" x2="489" y2="97.5" stroke="#2e5e34" stroke-width="1.1"/><line x1="0" y1="77.5" x2="489" y2="77.5" stroke="#2e5e34" stroke-width="1.1"/><line x1="0" y1="58.5" x2="489" y2="58.5" stroke="#2e5e34" stroke-width="1.1"/><line x1="0" y1="39.5" x2="489" y2="39.5" stroke="#2e5e34" stroke-width="1.1"/><line x1="0" y1="20.5" x2="489" y2="20.5" stroke="#2e5e34" stroke-width="1.1"/><polyline points="0.0,32.94 0.5,34.26 1.0,35.65 1.5,37.09 2.0,38.59 2.5,40.15 3.0,41.76 3.5,43.42 4.0,45.13 4.5,46.89 5.0,48.70 5.5,50.56 6.0,52.46 6.5,54.40 7.0,56.38 7.5,58.40 8.0,60.46 8.5,62.55 9.0,64.67 9.5,66.83 10.0,69.01 10.5,71.22 11.0,73.46 11.5,75.72 12.0,78.00 12.5,80.29 13.0,82.60 13.5,84.93 14.0,87.27 14.5,89.61 15.0,91.97 15.5,94.33 16.0,96.69 16.5,99.05 17.0,101.41 17.5,103.76 18.0,106.11 18.5,108.45 19.0,110.78 19.5,113.10 20.0,115.40 20.5,117.69 21.0,119.95 21.5,122.20 22.0,124.42 22.5,126.61 23.0,128.78 23.5,130.91 24.0,133.01 24.5,135.08 25.0,137.12 25.5,139.11 26.0,141.07 26.5,142.98 27.0,144.85 27.5,146.68 28.0,148.46 28.5,150.19 29.0,151.87 29.5,153.50 30.0,155.07 30.5,156.59 31.0,158.05 31.5,159.46 32.0,160.80 32.5,162.09 33.0,163.31 33.5,164.48 34.0,165.57 34.5,166.61 35.0,167.57 35.5,168.47 36.0,169.30 36.5,170.07 37.0,170.76 37.5,171.39 38.0,171.94 38.5,172.43 39.0,172.84 39.5,173.18 40.0,173.45 40.5,173.64 41.0,173.77 41.5,173.82 42.0,173.80 42.5,173.70 43.0,173.54 43.5,173.30 44.0,172.98 44.5,172.60 45.0,172.15 45.5,171.62 46.0,171.02 46.5,170.35 47.0,169.62 47.5,168.81 48.0,167.94 48.5,167.00 49.0,165.99 49.5,164.92 50.0,163.79 50.5,162.59 51.0,161.33 51.5,160.00 52.0,158.62 52.5,157.18 53.0,155.68 53.5,154.13 54.0,152.53 54.5,150.87 55.0,149.16 55.5,147.40 56.0,145.59 56.5,143.74 57.0,141.84 57.5,139.90 58.0,137.92 58.5,135.90 59.0,133.85 59.5,131.76 60.0,129.63 60.5,127.48 61.0,125.30 61.5,123.09 62.0,120.85 62.5,118.60 63.0,116.32 63.5,114.02 64.0,111.71 64.5,109.39 65.0,107.05 65.5,104.70 66.0,102.35 66.5,99.99 67.0,97.63 67.5,95.27 68.0,92.91 68.5,90.55 69.0,88.20 69.5,85.86 70.0,83.53 70.5,81.21 71.0,78.91 71.5,76.63 72.0,74.36 72.5,72.12 73.0,69.89 73.5,67.70 74.0,65.53 74.5,63.40 75.0,61.29 75.5,59.22 76.0,57.18 76.5,55.18 77.0,53.23 77.5,51.31 78.0,49.44 78.5,47.61 79.0,45.83 79.5,44.10 80.0,42.41 80.5,40.78 81.0,39.21 81.5,37.68 82.0,36.22 82.5,34.81 83.0,33.46 83.5,32.17 84.0,30.95 84.5,29.78 85.0,28.68 85.5,27.64 86.0,26.67 86.5,25.77 87.0,24.94 87.5,24.17 88.0,23.47 88.5,22.84 89.0,22.28 89.5,21.80 90.0,21.38 90.5,21.04 91.0,20.76 91.5,20.56 92.0,20.44 92.5,20.38 93.0,20.40 93.5,20.49 94.0,20.65 94.5,20.89 95.0,21.20 95.5,21.58 96.0,22.03 96.5,22.55 97.0,23.15 97.5,23.81 98.0,24.54 98.5,25.34 99.0,26.21 99.5,27.15 100.0,28.15 100.5,29.22 101.0,30.36 101.5,31.55 102.0,32.81 102.5,34.13 103.0,35.51 103.5,36.94 104.0,38.44 104.5,39.99 105.0,41.59 105.5,43.25 106.0,44.96 106.5,46.71 107.0,48.52 107.5,50.37 108.0,52.26 108.5,54.20 109.0,56.18 109.5,58.20 110.0,60.25 110.5,62.34 111.0,64.46 111.5,66.61 112.0,68.79 112.5,71.00 113.0,73.24 113.5,75.49 114.0,77.77 114.5,80.06 115.0,82.37 115.5,84.70 116.0,87.03 116.5,89.38 117.0,91.73 117.5,94.09 118.0,96.45 118.5,98.81 119.0,101.17 119.5,103.53 120.0,105.88 120.5,108.22 121.0,110.55 121.5,112.87 122.0,115.17 122.5,117.46 123.0,119.73 123.5,121.97 124.0,124.19 124.5,126.39 125.0,128.56 125.5,130.70 126.0,132.81 126.5,134.88 127.0,136.92 127.5,138.92 128.0,140.88 128.5,142.79 129.0,144.67 129.5,146.50 130.0,148.28 130.5,150.02 131.0,151.70 131.5,153.34 132.0,154.92 132.5,156.44 133.0,157.91 133.5,159.32 134.0,160.67 134.5,161.96 135.0,163.19 135.5,164.36 136.0,165.47 136.5,166.51 137.0,167.48 137.5,168.39 138.0,169.22 138.5,170.00 139.0,170.70 139.5,171.33 140.0,171.89 140.5,172.38 141.0,172.80 141.5,173.15 142.0,173.42 142.5,173.63 143.0,173.76 143.5,173.82 144.0,173.80 144.5,173.71 145.0,173.56 145.5,173.32 146.0,173.02 146.5,172.64 147.0,172.19 147.5,171.67 148.0,171.08 148.5,170.42 149.0,169.70 149.5,168.90 150.0,168.03 150.5,167.10 151.0,166.10 151.5,165.03 152.0,163.90 152.5,162.71 153.0,161.45 153.5,160.14 154.0,158.76 154.5,157.33 155.0,155.84 155.5,154.29 156.0,152.69 156.5,151.04 157.0,149.33 157.5,147.58 158.0,145.77 158.5,143.93 159.0,142.03 159.5,140.10 160.0,138.12 160.5,136.11 161.0,134.05 161.5,131.97 162.0,129.85 162.5,127.70 163.0,125.52 163.5,123.31 164.0,121.08 164.5,118.82 165.0,116.55 165.5,114.25 166.0,111.94 166.5,109.62 167.0,107.28 167.5,104.94 168.0,102.59 168.5,100.23 169.0,97.87 169.5,95.51 170.0,93.15 170.5,90.79 171.0,88.44 171.5,86.10 172.0,83.76 172.5,81.45 173.0,79.14 173.5,76.85 174.0,74.59 174.5,72.34 175.0,70.12 175.5,67.92 176.0,65.75 176.5,63.61 177.0,61.50 177.5,59.42 178.0,57.38 178.5,55.38 179.0,53.42 179.5,51.50 180.0,49.62 180.5,47.79 181.0,46.00 181.5,44.27 182.0,42.58 182.5,40.94 183.0,39.36 183.5,37.83 184.0,36.36 184.5,34.95 185.0,33.59 185.5,32.30 186.0,31.07 186.5,29.89 187.0,28.79 187.5,27.75 188.0,26.77 188.5,25.86 189.0,25.02 189.5,24.24 190.0,23.54 190.5,22.90 191.0,22.34 191.5,21.84 192.0,21.42 192.5,21.07 193.0,20.79 193.5,20.58 194.0,20.45 194.5,20.38 195.0,20.40 195.5,20.48 196.0,20.64 196.5,20.86 197.0,21.16 197.5,21.54 198.0,21.98 198.5,22.50 199.0,23.08 199.5,23.74 200.0,24.47 200.5,25.26 201.0,26.12 201.5,27.05 202.0,28.05 202.5,29.11 203.0,30.24 203.5,31.43 204.0,32.68 204.5,33.99 205.0,35.37 205.5,36.80 206.0,38.29 206.5,39.83 207.0,41.43 207.5,43.08 208.0,44.78 208.5,46.54 209.0,48.34 209.5,50.18 210.0,52.07 210.5,54.01 211.0,55.98 211.5,57.99 212.0,60.04 212.5,62.13 213.0,64.25 213.5,66.40 214.0,68.57 214.5,70.78 215.0,73.01 215.5,75.26 216.0,77.54 216.5,79.83 217.0,82.14 217.5,84.46 218.0,86.80 218.5,89.14 219.0,91.50 219.5,93.85 220.0,96.21 220.5,98.58 221.0,100.94 221.5,103.29 222.0,105.64 222.5,107.99 223.0,110.32 223.5,112.64 224.0,114.94 224.5,117.23 225.0,119.50 225.5,121.75 226.0,123.97 226.5,126.17 227.0,128.34 227.5,130.49 228.0,132.60 228.5,134.67 229.0,136.71 229.5,138.72 230.0,140.68 230.5,142.60 231.0,144.48 231.5,146.32 232.0,148.11 232.5,149.85 233.0,151.54 233.5,153.17 234.0,154.76 234.5,156.29 235.0,157.76 235.5,159.18 236.0,160.54 236.5,161.84 237.0,163.07 237.5,164.25 238.0,165.36 238.5,166.40 239.0,167.38 239.5,168.30 240.0,169.14 240.5,169.92 241.0,170.63 241.5,171.27 242.0,171.84 242.5,172.34 243.0,172.76 243.5,173.12 244.0,173.40 244.5,173.61 245.0,173.75 245.5,173.81 246.0,173.81 246.5,173.73 247.0,173.57 247.5,173.35 248.0,173.05 248.5,172.68 249.0,172.24 249.5,171.73 250.0,171.15 250.5,170.49 251.0,169.77 251.5,168.98 252.0,168.12 252.5,167.19 253.0,166.20 253.5,165.14 254.0,164.02 254.5,162.83 255.0,161.58 255.5,160.27 256.0,158.90 256.5,157.47 257.0,155.99 257.5,154.45 258.0,152.85 258.5,151.20 259.0,149.50 259.5,147.75 260.0,145.96 260.5,144.11 261.0,142.22 261.5,140.29 262.0,138.32 262.5,136.31 263.0,134.26 263.5,132.18 264.0,130.06 264.5,127.91 265.0,125.74 265.5,123.53 266.0,121.30 266.5,119.05 267.0,116.78 267.5,114.49 268.0,112.19 268.5,109.90 269.0,107.62 269.5,105.39 270.0,103.23 270.5,101.16 271.0,99.20 271.5,97.28 272.0,95.13 272.5,91.92 273.0,88.44 273.5,85.05 274.0,82.20 274.5,80.32 275.0,78.45 275.5,76.51 276.0,74.50 276.5,72.40 277.0,70.27 277.5,68.11 278.0,65.95 278.5,63.82 279.0,61.71 279.5,59.63 280.0,57.59 280.5,55.58 281.0,53.62 281.5,51.69 282.0,49.81 282.5,47.97 283.0,46.18 283.5,44.44 284.0,42.75 284.5,41.11 285.0,39.52 285.5,37.98 286.0,36.51 286.5,35.09 287.0,33.73 287.5,32.43 288.0,31.19 288.5,30.01 289.0,28.90 289.5,27.85 290.0,26.86 290.5,25.95 291.0,25.10 291.5,24.32 292.0,23.60 292.5,22.96 293.0,22.39 293.5,21.89 294.0,21.46 294.5,21.10 295.0,20.81 295.5,20.60 296.0,20.46 296.5,20.39 297.0,20.39 297.5,20.47 298.0,20.62 298.5,20.84 299.0,21.13 299.5,21.50 300.0,21.93 300.5,22.44 301.0,23.02 301.5,23.67 302.0,24.39 302.5,25.18 303.0,26.03 303.5,26.96 304.0,27.95 304.5,29.00 305.0,30.12 305.5,31.30 306.0,32.53 306.5,33.79 307.0,35.07 307.5,36.33 308.0,37.54 308.5,38.69 309.0,39.79 309.5,40.92 310.0,42.91 310.5,45.83 311.0,48.94 311.5,51.88 312.0,53.78 312.5,55.20 313.0,56.72 313.5,58.42 314.0,60.33 314.5,62.47 315.0,64.83 315.5,67.38 316.0,70.05 316.5,72.74 317.0,74.06 317.5,75.04 318.0,76.03 318.5,77.42 319.0,80.22 319.5,83.06 320.0,85.83 320.5,88.49 321.0,91.05 321.5,93.52 322.0,95.94 322.5,98.32 323.0,100.70 323.5,103.06 324.0,105.41 324.5,107.75 325.0,110.09 325.5,112.41 326.0,114.71 326.5,117.00 327.0,119.28 327.5,121.53 328.0,123.75 328.5,125.95 329.0,128.13 329.5,130.27 330.0,132.39 330.5,134.47 331.0,136.51 331.5,138.52 332.0,140.49 332.5,142.41 333.0,144.30 333.5,146.14 334.0,147.93 334.5,149.68 335.0,151.37 335.5,153.01 336.0,154.60 336.5,156.14 337.0,157.62 337.5,159.04 338.0,160.41 338.5,161.71 339.0,162.95 339.5,164.13 340.0,165.25 340.5,166.30 341.0,167.29 341.5,168.21 342.0,169.06 342.5,169.85 343.0,170.56 343.5,171.21 344.0,171.78 344.5,172.29 345.0,172.72 345.5,173.09 346.0,173.38 346.5,173.59 347.0,173.74 347.5,173.81 348.0,173.81 348.5,173.74 349.0,173.59 349.5,173.38 350.0,173.09 350.5,172.72 351.0,172.29 351.5,171.78 352.0,171.21 352.5,170.56 353.0,169.85 353.5,169.06 354.0,168.21 354.5,167.29 355.0,166.30 355.5,165.25 356.0,164.13 356.5,162.95 357.0,161.71 357.5,160.41 358.0,159.04 358.5,157.62 359.0,156.14 359.5,154.60 360.0,153.01 360.5,151.37 361.0,149.68 361.5,147.93 362.0,146.14 362.5,144.30 363.0,142.41 363.5,140.49 364.0,138.52 364.5,136.50 365.0,134.45 365.5,132.34 366.0,130.16 366.5,127.89 367.0,125.50 367.5,122.98 368.0,120.35 368.5,117.65 369.0,115.39 369.5,114.04 370.0,112.86 370.5,111.54 371.0,109.46 371.5,106.68 372.0,103.90 372.5,101.21 373.0,98.62 373.5,96.12 374.0,93.69 374.5,91.32 375.0,89.00 375.5,86.75 376.0,84.59 376.5,82.54 377.0,80.61 377.5,78.76 378.0,76.91 378.5,73.88 379.0,70.56 379.5,67.26 380.0,64.31 380.5,62.59 381.0,60.91 381.5,59.20 382.0,57.43 382.5,55.60 383.0,53.73 383.5,51.85 384.0,49.98 384.5,48.15 385.0,46.36 385.5,44.61 386.0,42.91 386.5,41.27 387.0,39.67 387.5,38.14 388.0,36.65 388.5,35.23 389.0,33.86 389.5,32.55 390.0,31.31 390.5,30.12 391.0,29.00 391.5,27.95 392.0,26.96 392.5,26.03 393.0,25.18 393.5,24.39 394.0,23.67 394.5,23.02 395.0,22.44 395.5,21.93 396.0,21.50 396.5,21.13 397.0,20.84 397.5,20.62 398.0,20.47 398.5,20.39 399.0,20.39 399.5,20.46 400.0,20.60 400.5,20.81 401.0,21.10 401.5,21.46 402.0,21.89 402.5,22.39 403.0,22.96 403.5,23.60 404.0,24.32 404.5,25.10 405.0,25.95 405.5,26.86 406.0,27.85 406.5,28.90 407.0,30.01 407.5,31.19 408.0,32.43 408.5,33.73 409.0,35.09 409.5,36.51 410.0,37.98 410.5,39.52 411.0,41.11 411.5,42.76 412.0,44.48 412.5,46.28 413.0,48.19 413.5,50.23 414.0,52.43 414.5,54.79 415.0,57.27 415.5,59.77 416.0,60.90 416.5,61.71 417.0,62.55 417.5,63.78 418.0,66.45 418.5,69.16 419.0,71.82 419.5,74.39 420.0,76.87 420.5,79.27 421.0,81.64 421.5,83.98 422.0,86.33 422.5,88.67 423.0,91.02 423.5,93.38 424.0,95.74 424.5,98.10 425.0,100.46 425.5,102.82 426.0,105.17 426.5,107.52 427.0,109.85 427.5,112.18 428.0,114.48 428.5,116.78 429.0,119.05 429.5,121.30 430.0,123.53 430.5,125.74 431.0,127.91 431.5,130.06 432.0,132.18 432.5,134.26 433.0,136.31 433.5,138.32 434.0,140.29 434.5,142.22 435.0,144.11 435.5,145.96 436.0,147.75 436.5,149.50 437.0,151.20 437.5,152.85 438.0,154.45 438.5,155.99 439.0,157.47 439.5,158.90 440.0,160.27 440.5,161.58 441.0,162.83 441.5,164.02 442.0,165.14 442.5,166.20 443.0,167.19 443.5,168.12 444.0,168.98 444.5,169.77 445.0,170.49 445.5,171.15 446.0,171.73 446.5,172.24 447.0,172.68 447.5,173.05 448.0,173.35 448.5,173.57 449.0,173.73 449.5,173.81 450.0,173.81 450.5,173.75 451.0,173.61 451.5,173.40 452.0,173.12 452.5,172.76 453.0,172.34 453.5,171.84 454.0,171.27 454.5,170.63 455.0,169.92 455.5,169.14 456.0,168.30 456.5,167.38 457.0,166.40 457.5,165.36 458.0,164.25 458.5,163.07 459.0,161.84 459.5,160.54 460.0,159.18 460.5,157.76 461.0,156.29 461.5,154.76 462.0,153.17 462.5,151.54 463.0,149.85 463.5,148.11 464.0,146.32 464.5,144.48 465.0,142.60 465.5,140.68 466.0,138.72 466.5,136.71 467.0,134.67 467.5,132.60 468.0,130.49 468.5,128.34 469.0,126.17 469.5,123.97 470.0,121.75 470.5,119.50 471.0,117.23 471.5,114.94 472.0,112.64 472.5,110.32 473.0,107.98 473.5,105.63 474.0,103.27 474.5,100.87 475.0,98.42 475.5,95.89 476.0,93.26 476.5,90.51 477.0,87.67 477.5,84.80 478.0,82.76 478.5,81.61 479.0,80.62 479.5,79.42 480.0,77.17 480.5,74.41 481.0,71.75 481.5,69.26 482.0,66.98 482.5,64.91 483.0,63.03 483.5,61.27 484.0,59.56 484.5,56.89 485.0,54.01 485.5,51.16 486.0,48.62 486.5,47.13 487.0,45.70 487.5,44.26 488.0,42.78 488.5,41.28 489.0,39.76" fill="none" stroke="#dcdccc" stroke-width="1.05"/><line x1="0" y1="192.5" x2="489" y2="192.5" stroke="#c84848" stroke-width="1"/></svg>
<div class="t" style="right:721.80px;top:623.00px;font-size:9.5px;line-height:12px;color:#141414;transform:scaleX(0.871);transform-origin:right center;">0.0</div>
<div style="position:absolute;left:179.00px;top:628.50px;width:4.00px;height:1.00px;background:#303030;"></div>
<div class="t" style="right:721.80px;top:603.82px;font-size:9.5px;line-height:12px;color:#141414;transform:scaleX(0.871);transform-origin:right center;">0.5</div>
<div style="position:absolute;left:179.00px;top:609.50px;width:4.00px;height:1.00px;background:#303030;"></div>
<div class="t" style="right:721.80px;top:584.64px;font-size:9.5px;line-height:12px;color:#141414;transform:scaleX(0.871);transform-origin:right center;">1.0</div>
<div style="position:absolute;left:179.00px;top:590.50px;width:4.00px;height:1.00px;background:#303030;"></div>
<div class="t" style="right:721.80px;top:565.46px;font-size:9.5px;line-height:12px;color:#141414;transform:scaleX(0.871);transform-origin:right center;">1.5</div>
<div style="position:absolute;left:179.00px;top:570.50px;width:4.00px;height:1.00px;background:#303030;"></div>
<div class="t" style="right:721.80px;top:546.28px;font-size:9.5px;line-height:12px;color:#141414;transform:scaleX(0.871);transform-origin:right center;">2.0</div>
<div style="position:absolute;left:179.00px;top:551.50px;width:4.00px;height:1.00px;background:#303030;"></div>
<div class="t" style="right:721.80px;top:527.10px;font-size:9.5px;line-height:12px;color:#141414;transform:scaleX(0.871);transform-origin:right center;">2.5</div>
<div style="position:absolute;left:179.00px;top:532.50px;width:4.00px;height:1.00px;background:#303030;"></div>
<div class="t" style="right:721.80px;top:507.92px;font-size:9.5px;line-height:12px;color:#141414;transform:scaleX(0.871);transform-origin:right center;">3.0</div>
<div style="position:absolute;left:179.00px;top:513.50px;width:4.00px;height:1.00px;background:#303030;"></div>
<div class="t" style="right:721.80px;top:488.74px;font-size:9.5px;line-height:12px;color:#141414;transform:scaleX(0.871);transform-origin:right center;">3.5</div>
<div style="position:absolute;left:179.00px;top:494.50px;width:4.00px;height:1.00px;background:#303030;"></div>
<div class="t" style="right:721.80px;top:469.56px;font-size:9.5px;line-height:12px;color:#141414;transform:scaleX(0.871);transform-origin:right center;">4.0</div>
<div style="position:absolute;left:179.00px;top:475.50px;width:4.00px;height:1.00px;background:#303030;"></div>
<div class="t" style="right:721.80px;top:450.38px;font-size:9.5px;line-height:12px;color:#141414;transform:scaleX(0.871);transform-origin:right center;">4.5</div>
<div style="position:absolute;left:179.00px;top:455.50px;width:4.00px;height:1.00px;background:#303030;"></div>
<div class="t" style="right:721.80px;top:431.20px;font-size:9.5px;line-height:12px;color:#141414;transform:scaleX(0.871);transform-origin:right center;">5.0</div>
<div style="position:absolute;left:179.00px;top:436.50px;width:4.00px;height:1.00px;background:#303030;"></div>
<div style="position:absolute;left:184.50px;top:630.00px;width:1.00px;height:3.00px;background:#303030;"></div>
<div class="t" style="left:-15.40px;width:400px;text-align:center;top:634.00px;font-size:9.5px;line-height:12px;color:#141414;transform:scaleX(0.909);transform-origin:center center;">0.0</div>
<div style="position:absolute;left:216.50px;top:630.00px;width:1.00px;height:3.00px;background:#303030;"></div>
<div class="t" style="left:17.10px;width:400px;text-align:center;top:634.00px;font-size:9.5px;line-height:12px;color:#141414;transform:scaleX(0.909);transform-origin:center center;">1.0</div>
<div style="position:absolute;left:249.50px;top:630.00px;width:1.00px;height:3.00px;background:#303030;"></div>
<div class="t" style="left:49.60px;width:400px;text-align:center;top:634.00px;font-size:9.5px;line-height:12px;color:#141414;transform:scaleX(0.909);transform-origin:center center;">2.0</div>
<div style="position:absolute;left:281.50px;top:630.00px;width:1.00px;height:3.00px;background:#303030;"></div>
<div class="t" style="left:82.10px;width:400px;text-align:center;top:634.00px;font-size:9.5px;line-height:12px;color:#141414;transform:scaleX(0.909);transform-origin:center center;">3.0</div>
<div style="position:absolute;left:314.50px;top:630.00px;width:1.00px;height:3.00px;background:#303030;"></div>
<div class="t" style="left:114.60px;width:400px;text-align:center;top:634.00px;font-size:9.5px;line-height:12px;color:#141414;transform:scaleX(0.909);transform-origin:center center;">4.0</div>
<div style="position:absolute;left:346.50px;top:630.00px;width:1.00px;height:3.00px;background:#303030;"></div>
<div class="t" style="left:147.10px;width:400px;text-align:center;top:634.00px;font-size:9.5px;line-height:12px;color:#141414;transform:scaleX(0.909);transform-origin:center center;">5.0</div>
<div style="position:absolute;left:379.50px;top:630.00px;width:1.00px;height:3.00px;background:#303030;"></div>
<div class="t" style="left:179.60px;width:400px;text-align:center;top:634.00px;font-size:9.5px;line-height:12px;color:#141414;transform:scaleX(0.909);transform-origin:center center;">6.0</div>
<div style="position:absolute;left:411.50px;top:630.00px;width:1.00px;height:3.00px;background:#303030;"></div>
<div class="t" style="left:212.10px;width:400px;text-align:center;top:634.00px;font-size:9.5px;line-height:12px;color:#141414;transform:scaleX(0.909);transform-origin:center center;">7.0</div>
<div style="position:absolute;left:444.50px;top:630.00px;width:1.00px;height:3.00px;background:#303030;"></div>
<div class="t" style="left:244.60px;width:400px;text-align:center;top:634.00px;font-size:9.5px;line-height:12px;color:#141414;transform:scaleX(0.909);transform-origin:center center;">8.0</div>
<div style="position:absolute;left:476.50px;top:630.00px;width:1.00px;height:3.00px;background:#303030;"></div>
<div class="t" style="left:277.10px;width:400px;text-align:center;top:634.00px;font-size:9.5px;line-height:12px;color:#141414;transform:scaleX(0.909);transform-origin:center center;">9.0</div>
<div style="position:absolute;left:509.50px;top:630.00px;width:1.00px;height:3.00px;background:#303030;"></div>
<div class="t" style="left:309.60px;width:400px;text-align:center;top:634.00px;font-size:9.5px;line-height:12px;color:#141414;transform:scaleX(0.811);transform-origin:center center;">10.0</div>
<div style="position:absolute;left:541.50px;top:630.00px;width:1.00px;height:3.00px;background:#303030;"></div>
<div class="t" style="left:342.10px;width:400px;text-align:center;top:634.00px;font-size:9.5px;line-height:12px;color:#141414;transform:scaleX(0.844);transform-origin:center center;">11.0</div>
<div style="position:absolute;left:574.50px;top:630.00px;width:1.00px;height:3.00px;background:#303030;"></div>
<div class="t" style="left:374.60px;width:400px;text-align:center;top:634.00px;font-size:9.5px;line-height:12px;color:#141414;transform:scaleX(0.811);transform-origin:center center;">12.0</div>
<div style="position:absolute;left:606.50px;top:630.00px;width:1.00px;height:3.00px;background:#303030;"></div>
<div class="t" style="left:407.10px;width:400px;text-align:center;top:634.00px;font-size:9.5px;line-height:12px;color:#141414;transform:scaleX(0.811);transform-origin:center center;">13.0</div>
<div style="position:absolute;left:639.50px;top:630.00px;width:1.00px;height:3.00px;background:#303030;"></div>
<div class="t" style="left:439.60px;width:400px;text-align:center;top:634.00px;font-size:9.5px;line-height:12px;color:#141414;transform:scaleX(0.811);transform-origin:center center;">14.0</div>
<div style="position:absolute;left:671.50px;top:630.00px;width:1.00px;height:3.00px;background:#303030;"></div>
<div class="t" style="left:472.10px;width:400px;text-align:center;top:634.00px;font-size:9.5px;line-height:12px;color:#141414;transform:scaleX(0.811);transform-origin:center center;">15.0</div>
<div class="t" style="left:227.00px;width:400px;text-align:center;top:646.20px;font-size:9px;line-height:12px;color:#141414;transform:scaleX(0.931);transform-origin:center center;">Time</div>
<div class="t" style="left:139.49px;top:527.7px;font-size:9px;line-height:12px;color:#141414;transform:rotate(-90deg) scaleX(0.985);transform-origin:center center;">Amplitude</div>
<div style="position:absolute;left:691.00px;top:397.40px;width:67.00px;height:260.60px;background:#d2d2d2;border-top:1px solid #e6e6e6;border-left:2px solid #e2e2e2;box-sizing:border-box;"></div>
<div style="position:absolute;left:746.20px;top:397.40px;width:11.80px;height:260.60px;background:linear-gradient(90deg,#c4c4c4,#d6d6d6 35%,#a8a8a8 75%,#5e5e5e);"></div>
<div style="position:absolute;left:734.50px;top:398.40px;width:11.70px;height:258.60px;background:#070707;"></div>
<div class="t" style="left:701.50px;top:398.80px;font-size:9px;line-height:12px;color:#141414;transform:scaleX(0.934);transform-origin:left center;">Plot 0</div>
<svg style="position:absolute;left:735px;top:398.80px" width="11" height="12"><path d="M0.3 9.8 L8.4 2.6 L11.2 5.2" stroke="#e0e0e0" stroke-width="1.1" fill="none"/></svg>
<div class="t" style="left:701.50px;top:415.13px;font-size:9px;line-height:12px;color:#141414;transform:scaleX(0.934);transform-origin:left center;">Plot 1</div>
<svg style="position:absolute;left:735px;top:415.13px" width="11" height="12"><path d="M0.3 9.8 L8.4 2.6 L11.2 5.2" stroke="#c06868" stroke-width="1.1" fill="none"/></svg>
<div class="t" style="left:701.50px;top:431.46px;font-size:9px;line-height:12px;color:#141414;transform:scaleX(0.934);transform-origin:left center;">Plot 2</div>
<svg style="position:absolute;left:735px;top:431.46px" width="11" height="12"><path d="M0.3 9.8 L8.4 2.6 L11.2 5.2" stroke="#78b878" stroke-width="1.1" fill="none"/></svg>
<div class="t" style="left:701.50px;top:447.79px;font-size:9px;line-height:12px;color:#141414;transform:scaleX(0.934);transform-origin:left center;">Plot 3</div>
<svg style="position:absolute;left:735px;top:447.79px" width="11" height="12"><path d="M0.3 9.8 L8.4 2.6 L11.2 5.2" stroke="#8a9ac0" stroke-width="1.1" fill="none"/></svg>
<div class="t" style="left:701.50px;top:464.12px;font-size:9px;line-height:12px;color:#141414;transform:scaleX(0.934);transform-origin:left center;">Plot 4</div>
<svg style="position:absolute;left:735px;top:464.12px" width="11" height="12"><path d="M0.3 9.8 L8.4 2.6 L11.2 5.2" stroke="#d8d8d8" stroke-width="1.1" fill="none"/></svg>
<div class="t" style="left:701.50px;top:480.45px;font-size:9px;line-height:12px;color:#141414;transform:scaleX(0.934);transform-origin:left center;">Plot 5</div>
<svg style="position:absolute;left:735px;top:480.45px" width="11" height="12"><path d="M0.3 9.8 L8.4 2.6 L11.2 5.2" stroke="#9a8ab0" stroke-width="1.1" fill="none"/></svg>
<div class="t" style="left:701.50px;top:496.78px;font-size:9px;line-height:12px;color:#141414;transform:scaleX(0.934);transform-origin:left center;">Plot 6</div>
<svg style="position:absolute;left:735px;top:496.78px" width="11" height="12"><path d="M0.3 9.8 L8.4 2.6 L11.2 5.2" stroke="#c8aab0" stroke-width="1.1" fill="none"/></svg>
<div class="t" style="left:701.50px;top:513.11px;font-size:9px;line-height:12px;color:#141414;transform:scaleX(0.934);transform-origin:left center;">Plot 7</div>
<svg style="position:absolute;left:735px;top:513.11px" width="11" height="12"><path d="M0.3 9.8 L8.4 2.6 L11.2 5.2" stroke="#6a6aa0" stroke-width="1.1" fill="none"/></svg>
<div class="t" style="left:701.50px;top:529.44px;font-size:9px;line-height:12px;color:#141414;transform:scaleX(0.934);transform-origin:left center;">Plot 8</div>
<svg style="position:absolute;left:735px;top:529.44px" width="11" height="12"><path d="M0.3 9.8 L8.4 2.6 L11.2 5.2" stroke="#b07aa0" stroke-width="1.1" fill="none"/></svg>
<div class="t" style="left:701.50px;top:545.77px;font-size:9px;line-height:12px;color:#141414;transform:scaleX(0.934);transform-origin:left center;">Plot 9</div>
<svg style="position:absolute;left:735px;top:545.77px" width="11" height="12"><path d="M0.3 9.8 L8.4 2.6 L11.2 5.2" stroke="#b0c0d0" stroke-width="1.1" fill="none"/></svg>
<div class="t" style="left:701.50px;top:562.10px;font-size:9px;line-height:12px;color:#141414;transform:scaleX(0.914);transform-origin:left center;">Plot 10</div>
<svg style="position:absolute;left:735px;top:562.10px" width="11" height="12"><path d="M0.3 9.8 L8.4 2.6 L11.2 5.2" stroke="#e0e0e0" stroke-width="1.1" fill="none"/></svg>
<div class="t" style="left:701.50px;top:578.43px;font-size:9px;line-height:12px;color:#141414;transform:scaleX(0.936);transform-origin:left center;">Plot 11</div>
<svg style="position:absolute;left:735px;top:578.43px" width="11" height="12"><path d="M0.3 9.8 L8.4 2.6 L11.2 5.2" stroke="#a06868" stroke-width="1.1" fill="none"/></svg>
<div class="t" style="left:701.50px;top:594.76px;font-size:9px;line-height:12px;color:#141414;transform:scaleX(0.914);transform-origin:left center;">Plot 12</div>
<svg style="position:absolute;left:735px;top:594.76px" width="11" height="12"><path d="M0.3 9.8 L8.4 2.6 L11.2 5.2" stroke="#98b898" stroke-width="1.1" fill="none"/></svg>
<div class="t" style="left:701.50px;top:611.09px;font-size:9px;line-height:12px;color:#141414;transform:scaleX(0.914);transform-origin:left center;">Plot 13</div>
<svg style="position:absolute;left:735px;top:611.09px" width="11" height="12"><path d="M0.3 9.8 L8.4 2.6 L11.2 5.2" stroke="#9aaac0" stroke-width="1.1" fill="none"/></svg>
<div class="t" style="left:701.50px;top:627.42px;font-size:9px;line-height:12px;color:#141414;transform:scaleX(0.914);transform-origin:left center;">Plot 14</div>
<svg style="position:absolute;left:735px;top:627.42px" width="11" height="12"><path d="M0.3 9.8 L8.4 2.6 L11.2 5.2" stroke="#e0e0d0" stroke-width="1.1" fill="none"/></svg>
<div class="t" style="left:701.50px;top:643.75px;font-size:9px;line-height:12px;color:#141414;transform:scaleX(0.914);transform-origin:left center;">Plot 15</div>
<svg style="position:absolute;left:735px;top:643.75px" width="11" height="12"><path d="M0.3 9.8 L8.4 2.6 L11.2 5.2" stroke="#9a8ab8" stroke-width="1.1" fill="none"/></svg>
</body></html>
